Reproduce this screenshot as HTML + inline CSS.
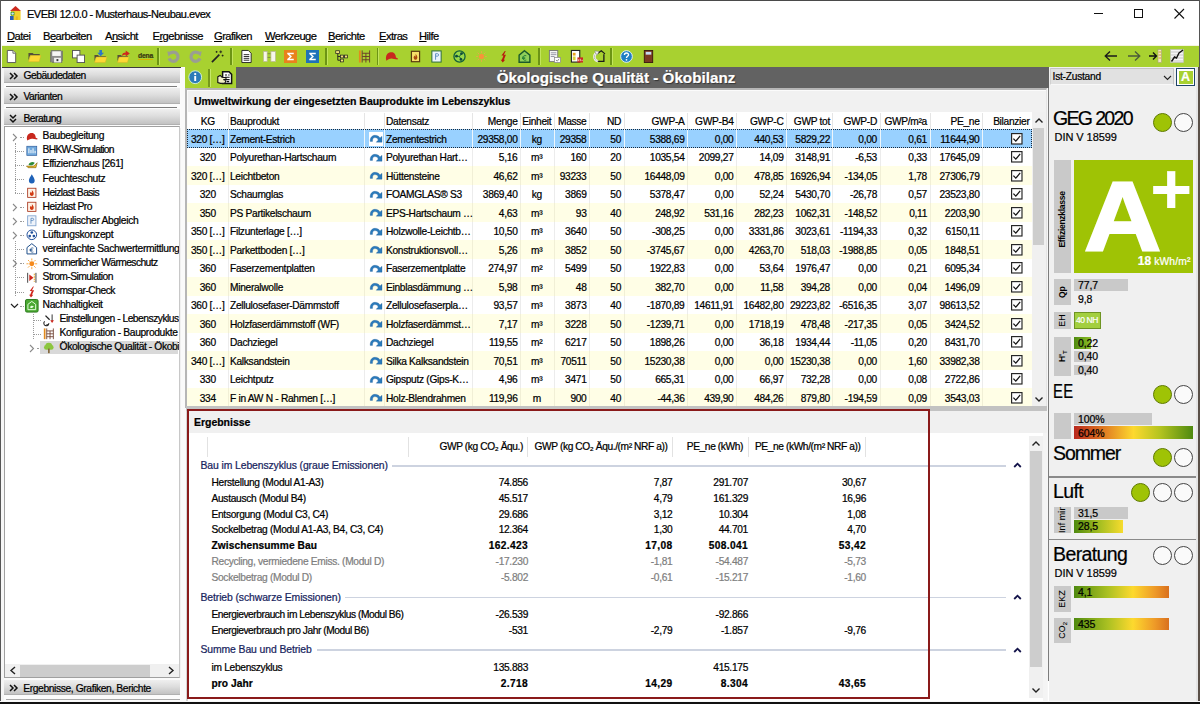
<!DOCTYPE html><html lang="de"><head><meta charset="utf-8"><title>EVEBI 12.0.0 - Musterhaus-Neubau.evex</title><style>
*{box-sizing:border-box;margin:0;padding:0}
html,body{width:1200px;height:704px;overflow:hidden;background:#fff}
body{position:relative;font-family:"Liberation Sans",sans-serif;font-size:10px;color:#000;letter-spacing:-0.25px;-webkit-text-stroke:0.22px}
.a{position:absolute;white-space:nowrap}
.t{position:absolute;white-space:nowrap;line-height:12px;height:12px}
.r{text-align:right}
.c{text-align:center}
.b{font-weight:bold}
u{text-decoration-thickness:1px;text-underline-offset:1px}
svg{position:absolute;overflow:visible}
.hdr{position:absolute;left:3.5px;width:176.5px;height:15px;background:linear-gradient(#efefef,#dedede 45%,#c2c2c2);border:0 solid #b0b0b0;border-bottom-width:1px}
.vl{position:absolute;background:#c9c9c9;left:1054px;width:17px;overflow:hidden}
.vt{position:absolute;white-space:nowrap;transform-origin:0 0;transform:rotate(-90deg);font-weight:bold;font-size:8.6px;letter-spacing:-0.12px;-webkit-text-stroke:0;text-align:center;line-height:17px;height:17px;left:0}
.big{position:absolute;white-space:nowrap;font-size:19.5px;letter-spacing:-0.6px;line-height:20px;left:1053px}
.din{position:absolute;white-space:nowrap;font-size:11px;letter-spacing:-0.05px;line-height:12px;left:1054.5px;-webkit-text-stroke:0.2px #000}
.circ{position:absolute;width:19px;height:19px;border-radius:50%;border:1px solid #444;background:#fafafa}
.circ.g{background:#9fc305;border-color:#5f7a00}
.bar{position:absolute;left:1074px;font-size:10.5px;line-height:12px;padding-left:4px;letter-spacing:-0.1px;white-space:nowrap}
.sep{position:absolute;width:1.7px;top:48px;height:17px;background:#6c9414;box-shadow:1px 0 0 #c2e45e}
</style></head><body>
<div class="a" style="left:0px;top:0px;width:1200px;height:1px;background:#4a4a4a;"></div>
<svg style="left:9.5px;top:6.2px" width="11" height="14.3" viewBox="0 0 11 14.3"><path d="M5.5 0L11 4.9H0Z" fill="#cc2a1e"/><rect x="1" y="4.9" width="9.6" height="9.1" fill="#f2d12e"/><rect x="0.6" y="5.8" width="3.8" height="3.6" fill="#3a9a3a"/><rect x="0" y="10" width="3.6" height="4" fill="#2a5fb8"/><circle cx="2.6" cy="7.6" r="1.2" fill="#cfe3f5"/><rect x="5.8" y="10.5" width="2" height="3.5" fill="#e8b820"/></svg>
<div class="t " style="left:27px;top:8px;font-size:11px;letter-spacing:-0.5px;line-height:13px;height:13px">EVEBI 12.0.0 - Musterhaus-Neubau.evex</div>
<svg style="left:1090px;top:5px" width="100" height="18" viewBox="0 0 100 18"><path d="M4 8.5H13" stroke="#111" stroke-width="1"/><rect x="44.5" y="4.5" width="8" height="8" fill="none" stroke="#111" stroke-width="1"/><path d="M84.5 4 L94 13.5 M94 4 L84.5 13.5" stroke="#111" stroke-width="1.1"/></svg>
<div class="t " style="left:7px;top:30px;font-size:11.2px;letter-spacing:-0.55px;line-height:13px;height:13px"><u>D</u>atei</div>
<div class="t " style="left:43px;top:30px;font-size:11.2px;letter-spacing:-0.55px;line-height:13px;height:13px">B<u>e</u>arbeiten</div>
<div class="t " style="left:105px;top:30px;font-size:11.2px;letter-spacing:-0.55px;line-height:13px;height:13px">A<u>n</u>sicht</div>
<div class="t " style="left:152.5px;top:30px;font-size:11.2px;letter-spacing:-0.55px;line-height:13px;height:13px">E<u>r</u>gebnisse</div>
<div class="t " style="left:214px;top:30px;font-size:11.2px;letter-spacing:-0.55px;line-height:13px;height:13px"><u>G</u>rafiken</div>
<div class="t " style="left:265px;top:30px;font-size:11.2px;letter-spacing:-0.55px;line-height:13px;height:13px"><u>W</u>erkzeuge</div>
<div class="t " style="left:328px;top:30px;font-size:11.2px;letter-spacing:-0.55px;line-height:13px;height:13px"><u>B</u>erichte</div>
<div class="t " style="left:379px;top:30px;font-size:11.2px;letter-spacing:-0.55px;line-height:13px;height:13px"><u>E</u>xtras</div>
<div class="t " style="left:419px;top:30px;font-size:11.2px;letter-spacing:-0.55px;line-height:13px;height:13px"><u>H</u>ilfe</div>
<div class="a" style="left:0px;top:44.5px;width:1200px;height:1.5px;background:#f6f4e0;"></div>
<div class="a" style="left:0px;top:46px;width:1200px;height:21.2px;background:#a8d130;"></div>
<div class="sep" style="left:157.2px"></div>
<div class="sep" style="left:230.3px"></div>
<div class="sep" style="left:325.3px"></div>
<div class="sep" style="left:376.8px"></div>
<div class="sep" style="left:538.3px"></div>
<div class="sep" style="left:610.3px"></div>
<svg style="left:5.0px;top:50.4px" width="13" height="13" viewBox="0 0 14 14"><path d="M2.5 0.5H8.5L11.5 3.5V13.5H2.5Z" fill="#fff" stroke="#555" stroke-width="1"/><path d="M8.5 0.5V3.5H11.5" fill="#ddd" stroke="#555" stroke-width="0.8"/></svg>
<svg style="left:28.0px;top:50.4px" width="13" height="13" viewBox="0 0 14 14"><path d="M0.5 3.2H5L6.2 4.4H12.6V6H2.2L0.5 11Z" fill="#55503a"/><path d="M0.6 12.6L2.6 6H13.8L12 12.6Z" fill="#fdd835" stroke="#d8b020" stroke-width="0.5"/></svg>
<svg style="left:49.5px;top:50.4px" width="13" height="13" viewBox="0 0 14 14"><rect x="0.8" y="0.8" width="12.4" height="12.4" fill="#8e8e8e" stroke="#6a6a6a" stroke-width="1" stroke-dasharray="11 1.4"/><rect x="2.4" y="1.4" width="9.2" height="5" fill="#f6f6f6"/><rect x="4.4" y="8.4" width="7.4" height="5" fill="#f0f0f0"/><rect x="7" y="9.8" width="2" height="2.2" fill="#333"/></svg>
<svg style="left:71.5px;top:50.4px" width="13" height="13" viewBox="0 0 14 14"><rect x="0.5" y="0.5" width="8" height="8" fill="#fff" stroke="#555"/><rect x="5.5" y="5.5" width="8" height="8" fill="#fff" stroke="#555"/></svg>
<svg style="left:94.0px;top:50.4px" width="13" height="13" viewBox="0 0 14 14"><path d="M0.5 5.4H4.4L5.4 6.6H12.8V8H2L0.5 12Z" fill="#55503a"/><path d="M0.6 13.4L2.4 7.6H13.8L12.2 13.4Z" fill="#fdd835" stroke="#d8b020" stroke-width="0.5"/><path d="M5.8 0H8.6V3H10.8L7.2 6.6L3.6 3H5.8Z" fill="#2b78c8"/></svg>
<svg style="left:116.5px;top:50.4px" width="13" height="13" viewBox="0 0 14 14"><path d="M0.5 5.4H4.4L5.4 6.6H11.8V8H2L0.5 12Z" fill="#55503a"/><path d="M0.6 13.4L2.4 7.6H12.8L11.2 13.4Z" fill="#fdd835" stroke="#d8b020" stroke-width="0.5"/><path d="M5.4 6.4C5.4 3.6 7 2.6 9.4 2.6V0.6L13.8 3.8L9.4 7V5C7.6 5 6.4 5.2 5.4 6.4Z" fill="#d0261c"/></svg>
<div class="t " style="left:138px;top:51px;font-size:6.8px;font-weight:bold;color:#3a3a12;letter-spacing:-0.2px;line-height:10px;height:10px;text-decoration:underline;text-decoration-color:#d8b000;text-underline-offset:1px">dena</div>
<svg style="left:166.5px;top:50.4px" width="13" height="13" viewBox="0 0 14 14"><path d="M3.4 3.6A5 5 0 1 1 2.2 9" fill="none" stroke="#9a9e92" stroke-width="3.5"/><path d="M0.3 1.6L6.6 2.2L1.6 7Z" fill="#9a9e92"/></svg>
<svg style="left:188.5px;top:50.4px" width="13" height="13" viewBox="0 0 14 14"><path d="M10.6 3.6A5 5 0 1 0 11.8 9" fill="none" stroke="#9a9e92" stroke-width="3.5"/><path d="M13.7 1.6L7.4 2.2L12.4 7Z" fill="#9a9e92"/></svg>
<svg style="left:211.0px;top:50.4px" width="13" height="13" viewBox="0 0 14 14"><path d="M1 13L9 5" stroke="#222" stroke-width="1.8"/><path d="M10.5 0.5V3.5M9 2H12M12.5 5V7M11.5 6H13.5M6 1V3M5 2H7" stroke="#1a1a1a" stroke-width="0.9"/></svg>
<svg style="left:240.0px;top:50.4px" width="13" height="13" viewBox="0 0 14 14"><path d="M2 0.5H9L12 3.5V13.5H2Z" fill="#fff" stroke="#222" stroke-width="1"/><path d="M4 5H10M4 7H10M4 9H10M4 11H10" stroke="#222" stroke-width="1"/></svg>
<svg style="left:263.0px;top:50.4px" width="13" height="13" viewBox="0 0 14 14"><rect x="0.5" y="1.5" width="4" height="11" fill="#f7f7ea" stroke="#b8b890" stroke-width="0.8"/><rect x="8.5" y="1.5" width="5" height="11" fill="#f7f7ea" stroke="#b8b890" stroke-width="0.8"/><path d="M5 4H8M5 8H8" stroke="#7a8a40" stroke-width="1"/></svg>
<svg style="left:283.5px;top:50.4px" width="13" height="13" viewBox="0 0 14 14"><rect width="14" height="14" fill="#e9821c"/><path d="M3.5 3H10.5V4.6H6L8.6 7L6 9.4H10.5V11H3.5V9.8L6.4 7L3.5 4.2Z" fill="#fff"/></svg>
<svg style="left:306px;top:50.4px" width="13" height="13" viewBox="0 0 14 14"><rect width="14" height="14" fill="#1f72b8"/><path d="M3.5 3H10.5V4.6H6L8.6 7L6 9.4H10.5V11H3.5V9.8L6.4 7L3.5 4.2Z" fill="#fff"/></svg>
<svg style="left:335.0px;top:50.4px" width="13" height="13" viewBox="0 0 14 14"><path d="M3 3V11H6M3 7H6M9 7H11" stroke="#222" stroke-width="1" fill="none"/><rect x="0.8" y="0.8" width="4" height="3" fill="#f5e27a" stroke="#222" stroke-width="0.8"/><rect x="5.8" y="5.5" width="3.4" height="3" fill="#f5e27a" stroke="#222" stroke-width="0.8"/><rect x="5.8" y="9.8" width="3.4" height="3" fill="#f5e27a" stroke="#222" stroke-width="0.8"/><rect x="10.2" y="5.5" width="3.2" height="3" fill="#f5e27a" stroke="#222" stroke-width="0.8"/></svg>
<svg style="left:358.0px;top:50.4px" width="13" height="13" viewBox="0 0 14 14"><rect x="1" y="0.5" width="2" height="13" fill="#e38a1c"/><path d="M4.5 0.5V13.5M12.5 0.5V13.5M4.5 3.5H12.5M4.5 7H12.5M4.5 10.5H12.5M8.5 3.5V13.5" stroke="#6a3a2a" stroke-width="1" fill="none"/></svg>
<svg style="left:385.0px;top:50.4px" width="13" height="13" viewBox="0 0 14 14"><path d="M1 9.5C1 4 4 2.5 7 2.5C10.5 2.5 11.5 5.5 11.8 8L14 9.2L13.5 10.2L8 9.3C5 9 3 10.5 1.5 11.5Z" fill="#c8281e"/></svg>
<svg style="left:408.5px;top:50.4px" width="13" height="13" viewBox="0 0 14 14"><rect x="2.6" y="1.4" width="8.8" height="11.2" fill="#f6e06a" stroke="#5a3a10" stroke-width="1.3"/><path d="M7 4C8.3 5.6 9.2 6.6 9 8.4C8.9 9.8 7.9 10.6 7 10.6C6.1 10.6 5.1 9.8 5 8.4C4.9 7.4 5.7 6.9 5.9 6C6.5 6.5 6.6 7 6.6 7.5C7.2 6.5 7.3 5.2 7 4Z" fill="#a84a10"/></svg>
<svg style="left:430.0px;top:50.4px" width="13" height="13" viewBox="0 0 14 14"><rect x="2" y="1" width="10" height="12" fill="#eaf3fb" stroke="#2e6e3a" stroke-width="1.1"/><path d="M6 10.5V4H8.2C9.6 4 9.6 6.6 8.2 6.6H6" fill="none" stroke="#5a88bf" stroke-width="1"/></svg>
<svg style="left:453.0px;top:50.4px" width="13" height="13" viewBox="0 0 14 14"><circle cx="7" cy="7" r="6" fill="#98d84a" stroke="#14603a" stroke-width="1.4"/><path d="M7 7L9.2 3.6M7 7L3.6 6.6M7 7L8.6 10.4" stroke="#14603a" stroke-width="1"/><circle cx="9.2" cy="3.8" r="1.5" fill="#0e4a3a"/><circle cx="3.8" cy="6.6" r="1.5" fill="#0e4a3a"/><circle cx="8.6" cy="10.2" r="1.5" fill="#0e4a3a"/></svg>
<svg style="left:474.5px;top:50.4px" width="13" height="13" viewBox="0 0 14 14"><circle cx="7" cy="7" r="2.9" fill="#f5963a"/><path d="M7 1.2V3.2M7 10.8V12.8M1.2 7H3.2M10.8 7H12.8M2.9 2.9L4.3 4.3M9.7 9.7L11.1 11.1M11.1 2.9L9.7 4.3M2.9 11.1L4.3 9.7" stroke="#e8a84a" stroke-width="1"/></svg>
<svg style="left:496.5px;top:50.4px" width="13" height="13" viewBox="0 0 14 14"><path d="M8.4 1L4.8 6H7L5.2 10.4H4L6.2 13.4L8.8 10.4H7.4L9.6 5.2H7.4L9.4 1Z" fill="#b81a10"/></svg>
<svg style="left:518.0px;top:50.4px" width="13" height="13" viewBox="0 0 14 14"><path d="M7 0.8L12.8 5.5V13.2H1.2V5.5Z" fill="#90d05a" stroke="#1a5a2a" stroke-width="1.5"/><path d="M9 6.2C6.5 5 5.3 7 5.3 8.5C5.3 10 6.5 12 9 10.8M4.3 7.8H7.8M4.3 9.2H7.8" stroke="#1e7a32" stroke-width="0.9" fill="none"/></svg>
<svg style="left:548.0px;top:50.4px" width="13" height="13" viewBox="0 0 14 14"><rect x="1.5" y="0.5" width="9" height="12" fill="#f6f6f6" stroke="#777" stroke-width="1"/><path d="M3 3H9M3 5H9M3 7H7" stroke="#889" stroke-width="0.9"/><rect x="7" y="8" width="6.5" height="5.5" fill="#fff" stroke="#888" stroke-width="0.8"/><path d="M8.5 10.8L10 12L12 9.5" stroke="#666" stroke-width="0.8" fill="none"/></svg>
<svg style="left:570.0px;top:50.4px" width="13" height="13" viewBox="0 0 14 14"><rect x="1.5" y="0.5" width="9" height="12.5" fill="#fff" stroke="#222" stroke-width="1.2"/><rect x="3" y="3" width="3" height="3" fill="#e8a21c"/><rect x="3" y="7" width="3" height="4" fill="#d8d23a"/><rect x="8" y="8" width="6" height="5.5" fill="#c8281e"/><path d="M9 12V10M11 12V9.5M13 12V10.5" stroke="#fff" stroke-width="0.8"/></svg>
<svg style="left:591.5px;top:50.4px" width="13" height="13" viewBox="0 0 14 14"><path d="M5.5 4L10 0.8L14 4.2" fill="none" stroke="#1a1a1a" stroke-width="1.3"/><path d="M12.8 4.5V12.2H6.5" fill="none" stroke="#1a1a1a" stroke-width="1.4"/><path d="M6.5 12.2C2.2 11.2 1.2 6.2 4.6 3.2" fill="none" stroke="#f4f4f4" stroke-width="2.6"/><path d="M6.5 12.2C2.2 11.2 1.2 6.2 4.6 3.2" fill="none" stroke="#8a8a8a" stroke-width="0.9" stroke-dasharray="1.2 0.8"/><path d="M2.8 1L7.5 1.6L5.4 5.6Z" fill="#f4f4f4" stroke="#777" stroke-width="0.5"/></svg>
<svg style="left:620.0px;top:50.4px" width="13" height="13" viewBox="0 0 14 14"><circle cx="7" cy="7" r="6.3" fill="#1f7fc4" stroke="#e8f2fa" stroke-width="1"/><path d="M4.8 5.3C4.8 2.6 9.2 2.6 9.2 5.2C9.2 6.8 7 6.8 7 8.6" fill="none" stroke="#fff" stroke-width="1.5"/><circle cx="7" cy="10.6" r="0.95" fill="#fff"/></svg>
<svg style="left:641.5px;top:50.4px" width="13" height="13" viewBox="0 0 14 14"><rect x="2.5" y="0.5" width="9" height="13" fill="#7a3a22" stroke="#3a1a10" stroke-width="1"/><rect x="4" y="2" width="6" height="3" fill="#c4dcf2"/></svg>
<svg style="left:1104px;top:48.8px" width="80" height="14" viewBox="0 0 80 14"><path d="M1 7H13M6 2.5L1.2 7L6 11.5" fill="none" stroke="#1a1a1a" stroke-width="1.3"/><path d="M24 7H36M31 2.5L35.8 7L31 11.5" fill="none" stroke="#4a5a3a" stroke-width="1.3"/><path d="M45 7H52M49 3.5L52.5 7L49 10.5" fill="none" stroke="#111" stroke-width="1.4"/><rect x="54" y="0.5" width="3.5" height="13" fill="#efe9c0" stroke="#a8a070" stroke-width="0.6"/><path d="M54.5 3H57M54.5 6H57M54.5 9H57" stroke="#d8a22a" stroke-width="1"/><rect x="66.5" y="0.5" width="13" height="13" fill="#f4f4f4" stroke="#bbb" stroke-width="0.6"/><path d="M67 3H79M67 6H79M67 9H79M67 12H79" stroke="#aaa" stroke-width="0.6"/><path d="M67.5 12.5L70.5 8L72.5 9L75 4L79 1" fill="none" stroke="#111" stroke-width="1.4"/></svg>
<div class="a" style="left:0px;top:67px;width:185.5px;height:637px;background:#f0f0f0;"></div>
<div class="a" style="left:3.5px;top:68px;width:177.5px;height:60px;background:#fbfbfb;"></div>
<div class="hdr" style="top:68px;height:14.8px"></div>
<svg style="left:8.5px;top:71.7px" width="9" height="8" viewBox="0 0 9 8"><path d="M1 1L4 4L1 7M5 1L8 4L5 7" fill="none" stroke="#111" stroke-width="1.5"/></svg>
<div class="t " style="left:23.5px;top:69.4px;font-size:10.3px;letter-spacing:-0.5px;line-height:13px;height:13px">Gebäudedaten</div>
<div class="a" style="left:6px;top:85.6px;width:171px;height:1.1px;background:#7c7c7c;"></div>
<div class="hdr" style="top:87.6px;height:16.2px"></div>
<svg style="left:8.5px;top:92.6px" width="9" height="8" viewBox="0 0 9 8"><path d="M1 1L4 4L1 7M5 1L8 4L5 7" fill="none" stroke="#111" stroke-width="1.5"/></svg>
<div class="t " style="left:23.5px;top:90.3px;font-size:10.3px;letter-spacing:-0.5px;line-height:13px;height:13px">Varianten</div>
<div class="a" style="left:6px;top:107.2px;width:171px;height:1.1px;background:#7c7c7c;"></div>
<div class="hdr" style="top:109.2px;height:16.2px"></div>
<svg style="left:8.5px;top:113.7px" width="8" height="9" viewBox="0 0 8 9"><path d="M1 1L4 4L7 1M1 5L4 8L7 5" fill="none" stroke="#111" stroke-width="1.5"/></svg>
<div class="t " style="left:23.5px;top:111.9px;font-size:10.3px;letter-spacing:-0.5px;line-height:13px;height:13px">Beratung</div>
<div class="a" style="left:0px;top:67px;width:181.6px;height:1px;background:#3c3c3c;"></div>
<div class="a" style="left:180.6px;top:67px;width:1px;height:60px;background:#3c3c3c;"></div>
<div class="a" style="left:4px;top:126px;width:176px;height:552px;background:#fff;border:1px solid #a0a0a0;border-right-color:#c8c8c8"></div>
<div class="a" style="left:5px;top:128px;width:174px;height:535px;overflow:hidden">
<svg style="left:7px;top:5px" width="6" height="9" viewBox="0 0 6 9"><path d="M1 1L4.5 4.5L1 8" fill="none" stroke="#8a8a8a" stroke-width="1.1"/></svg>
<div class="a" style="left:15px;top:8.8px;width:4px;height:0;border-top:1px dotted #9a9a9a"></div>
<svg style="left:20.7px;top:3.0000000000000115px" width="11.6" height="11.6" viewBox="0 0 14 14"><path d="M1 9.5C1 4 4 2.5 7 2.5C10.5 2.5 11.5 5.5 11.8 8L14 9.2L13.5 10.2L8 9.3C5 9 3 10.5 1.5 11.5Z" fill="#c8281e"/></svg>
<div class="t" style="left:37.6px;top:2.3px;font-size:10.3px;letter-spacing:-0.33px">Baubegleitung</div>
<div class="a" style="left:10px;top:22.9px;width:9px;height:0;border-top:1px dotted #9a9a9a"></div>
<svg style="left:20.7px;top:17.060000000000013px" width="11.6" height="11.6" viewBox="0 0 14 14"><rect x="1" y="1.5" width="12" height="11" fill="#6fa8dc" stroke="#2a5a9a" stroke-width="0.8"/><path d="M3.5 10V4M6 10V6M8.5 10V4M11 10V7" stroke="#fff" stroke-width="1.2"/></svg>
<div class="t" style="left:37.6px;top:16.4px;font-size:10.3px;letter-spacing:-0.73px">BHKW-Simulation</div>
<div class="a" style="left:10px;top:36.9px;width:9px;height:0;border-top:1px dotted #9a9a9a"></div>
<svg style="left:20.7px;top:31.120000000000015px" width="11.6" height="11.6" viewBox="0 0 14 14"><path d="M0.5 8.5H9.5L13.5 4.5L12 10.5H2.5Z" fill="#e8b82a" stroke="#7a5a10" stroke-width="0.7"/><path d="M3 7C4 3.5 8.5 3 10.5 4.5C9 7.5 6 8.5 3 7Z" fill="#2e8b3a"/></svg>
<div class="t" style="left:37.6px;top:30.4px;font-size:10.3px;letter-spacing:-0.33px">Effizienzhaus [261]</div>
<div class="a" style="left:10px;top:51.0px;width:9px;height:0;border-top:1px dotted #9a9a9a"></div>
<svg style="left:20.7px;top:45.18000000000002px" width="11.6" height="11.6" viewBox="0 0 14 14"><path d="M7 1.5C9 5 10.5 7 10.5 9.2A3.5 3.5 0 0 1 3.5 9.2C3.5 7 5 5 7 1.5Z" fill="#1f62b8"/></svg>
<div class="t" style="left:37.6px;top:44.5px;font-size:10.3px;letter-spacing:-0.33px">Feuchteschutz</div>
<div class="a" style="left:10px;top:65.0px;width:9px;height:0;border-top:1px dotted #9a9a9a"></div>
<svg style="left:20.7px;top:59.24000000000002px" width="11.6" height="11.6" viewBox="0 0 14 14"><rect x="2" y="1.5" width="10" height="11" fill="#fff4e8" stroke="#a83218" stroke-width="1"/><path d="M7 3.5C8.5 5.5 9.5 6.5 9.3 8.5C9.2 10 8 10.8 7 10.8C6 10.8 4.8 10 4.7 8.5C4.6 7.3 5.5 6.8 5.8 5.8C6.5 6.3 6.6 6.9 6.6 7.4C7.3 6.3 7.3 4.8 7 3.5Z" fill="#d23a12"/></svg>
<div class="t" style="left:37.6px;top:58.5px;font-size:10.3px;letter-spacing:-0.58px">Heizlast Basis</div>
<svg style="left:7px;top:75px" width="6" height="9" viewBox="0 0 6 9"><path d="M1 1L4.5 4.5L1 8" fill="none" stroke="#8a8a8a" stroke-width="1.1"/></svg>
<div class="a" style="left:15px;top:79.1px;width:4px;height:0;border-top:1px dotted #9a9a9a"></div>
<svg style="left:20.7px;top:73.30000000000003px" width="11.6" height="11.6" viewBox="0 0 14 14"><rect x="2" y="1.5" width="10" height="11" fill="#fff4e8" stroke="#a83218" stroke-width="1"/><path d="M7 3.5C8.5 5.5 9.5 6.5 9.3 8.5C9.2 10 8 10.8 7 10.8C6 10.8 4.8 10 4.7 8.5C4.6 7.3 5.5 6.8 5.8 5.8C6.5 6.3 6.6 6.9 6.6 7.4C7.3 6.3 7.3 4.8 7 3.5Z" fill="#d23a12"/></svg>
<div class="t" style="left:37.6px;top:72.6px;font-size:10.3px;letter-spacing:-0.52px">Heizlast Pro</div>
<svg style="left:7px;top:89px" width="6" height="9" viewBox="0 0 6 9"><path d="M1 1L4.5 4.5L1 8" fill="none" stroke="#8a8a8a" stroke-width="1.1"/></svg>
<div class="a" style="left:15px;top:93.2px;width:4px;height:0;border-top:1px dotted #9a9a9a"></div>
<svg style="left:20.7px;top:87.36000000000003px" width="11.6" height="11.6" viewBox="0 0 14 14"><rect x="2" y="1" width="10" height="12" fill="#eef3fa" stroke="#7ba0cc" stroke-width="1"/><path d="M6 10.5V4H8.2C9.6 4 9.6 6.6 8.2 6.6H6" fill="none" stroke="#5a88bf" stroke-width="1"/></svg>
<div class="t" style="left:37.6px;top:86.7px;font-size:10.3px;letter-spacing:-0.33px">hydraulischer Abgleich</div>
<svg style="left:7px;top:103px" width="6" height="9" viewBox="0 0 6 9"><path d="M1 1L4.5 4.5L1 8" fill="none" stroke="#8a8a8a" stroke-width="1.1"/></svg>
<div class="a" style="left:15px;top:107.2px;width:4px;height:0;border-top:1px dotted #9a9a9a"></div>
<svg style="left:20.7px;top:101.42000000000003px" width="11.6" height="11.6" viewBox="0 0 14 14"><circle cx="7" cy="7" r="5.8" fill="#fff" stroke="#1f4f9a" stroke-width="1.2"/><circle cx="7" cy="4.2" r="1.6" fill="#1f4f9a"/><circle cx="4.5" cy="8.6" r="1.6" fill="#1f4f9a"/><circle cx="9.5" cy="8.6" r="1.6" fill="#1f4f9a"/></svg>
<div class="t" style="left:37.6px;top:100.7px;font-size:10.3px;letter-spacing:-0.33px">Lüftungskonzept</div>
<div class="a" style="left:10px;top:121.3px;width:9px;height:0;border-top:1px dotted #9a9a9a"></div>
<svg style="left:20.7px;top:115.48000000000003px" width="11.6" height="11.6" viewBox="0 0 14 14"><path d="M7 0.8L12.8 5.5V13.2H1.2V5.5Z" fill="#fff" stroke="#1f4f8a" stroke-width="1.2"/><path d="M9 6.2C6.5 5 5.3 7 5.3 8.5C5.3 10 6.5 12 9 10.8M4.3 7.8H7.8M4.3 9.2H7.8" stroke="#1f4f8a" stroke-width="0.9" fill="none"/></svg>
<div class="t" style="left:37.6px;top:114.8px;font-size:10.3px;letter-spacing:-0.33px">vereinfachte Sachwertermittlung</div>
<svg style="left:7px;top:131px" width="6" height="9" viewBox="0 0 6 9"><path d="M1 1L4.5 4.5L1 8" fill="none" stroke="#8a8a8a" stroke-width="1.1"/></svg>
<div class="a" style="left:15px;top:135.3px;width:4px;height:0;border-top:1px dotted #9a9a9a"></div>
<svg style="left:20.7px;top:129.54000000000002px" width="11.6" height="11.6" viewBox="0 0 14 14"><circle cx="7" cy="7" r="3" fill="#f58a1c"/><path d="M7 0.5V3M7 11V13.5M0.5 7H3M11 7H13.5M2.4 2.4L4.2 4.2M9.8 9.8L11.6 11.6M11.6 2.4L9.8 4.2M2.4 11.6L4.2 9.8" stroke="#f7a030" stroke-width="1.1"/></svg>
<div class="t" style="left:37.6px;top:128.8px;font-size:10.3px;letter-spacing:-0.60px">Sommerlicher Wärmeschutz</div>
<div class="a" style="left:10px;top:149.4px;width:9px;height:0;border-top:1px dotted #9a9a9a"></div>
<svg style="left:20.7px;top:143.59999999999997px" width="11.6" height="11.6" viewBox="0 0 14 14"><path d="M2 1V13M12 1V13" stroke="#444" stroke-width="1.2"/><path d="M4 3L9 7L4 11Z" fill="#d0261c"/><path d="M10 2V12" stroke="#e8a21c" stroke-width="1.2" stroke-dasharray="2 1"/></svg>
<div class="t" style="left:37.6px;top:142.9px;font-size:10.3px;letter-spacing:-0.54px">Strom-Simulation</div>
<div class="a" style="left:10px;top:163.5px;width:9px;height:0;border-top:1px dotted #9a9a9a"></div>
<svg style="left:20.7px;top:157.66000000000003px" width="11.6" height="11.6" viewBox="0 0 14 14"><path d="M8.5 0.5L4.5 6H7L5 10.5H3.8L6 13.8L8.8 10.5H7.2L9.8 5H7.2L9.5 0.5Z" fill="#d0261c"/></svg>
<div class="t" style="left:37.6px;top:157.0px;font-size:10.3px;letter-spacing:-0.52px">Stromspar-Check</div>
<svg style="left:5px;top:175px" width="9" height="6" viewBox="0 0 9 6"><path d="M1 1L4.5 4.5L8 1" fill="none" stroke="#222" stroke-width="1.2"/></svg>
<div class="a" style="left:15px;top:177.5px;width:4px;height:0;border-top:1px dotted #9a9a9a"></div>
<svg style="left:19.7px;top:170.71999999999997px" width="13.6" height="13.6" viewBox="0 0 14 14"><rect x="0.5" y="0.5" width="13" height="13" rx="1.5" fill="#4aa832" stroke="#2a7a1c" stroke-width="1"/><path d="M7 2.5L11 5.5V11H3V5.5Z" fill="none" stroke="#e8ffe0" stroke-width="1"/><path d="M5 8.5C5.5 6.5 8 6.5 9 7.5C8 9.5 6 9.8 5 8.5Z" fill="#e8ffe0"/></svg>
<div class="t" style="left:37.6px;top:171.0px;font-size:10.3px;letter-spacing:-0.33px">Nachhaltigkeit</div>
<div class="a" style="left:28px;top:191.6px;width:8px;height:0;border-top:1px dotted #9a9a9a"></div>
<svg style="left:38.2px;top:185.78000000000003px" width="11.6" height="11.6" viewBox="0 0 14 14"><path d="M3 2L8 7" stroke="#222" stroke-width="1.6"/><path d="M2 9A3 3 0 1 0 7 11" fill="none" stroke="#222" stroke-width="1.3"/><path d="M11 0.5V9" stroke="#222" stroke-width="1.1"/><path d="M8.8 7.5L11 11L13.2 7.5Z" fill="#d0261c"/><path d="M4 13H7" stroke="#222" stroke-width="1.2"/></svg>
<div class="t" style="left:54.6px;top:185.1px;font-size:10.3px;letter-spacing:-0.51px">Einstellungen - Lebenszyklus</div>
<div class="a" style="left:28px;top:205.6px;width:8px;height:0;border-top:1px dotted #9a9a9a"></div>
<svg style="left:38.2px;top:199.83999999999997px" width="11.6" height="11.6" viewBox="0 0 14 14"><rect x="1" y="0.5" width="2" height="13" fill="#e38a1c"/><path d="M4.5 0.5V13.5M12.5 0.5V13.5M4.5 3.5H12.5M4.5 7H12.5M4.5 10.5H12.5M8.5 3.5V13.5" stroke="#6a3a2a" stroke-width="1" fill="none"/></svg>
<div class="t" style="left:54.6px;top:199.1px;font-size:10.3px;letter-spacing:-0.38px">Konfiguration - Bauprodukte</div>
<svg style="left:24px;top:216px" width="6" height="9" viewBox="0 0 6 9"><path d="M1 1L4.5 4.5L1 8" fill="none" stroke="#8a8a8a" stroke-width="1.1"/></svg>
<div class="a" style="left:32px;top:219.7px;width:4px;height:0;border-top:1px dotted #9a9a9a"></div>
<div class="a" style="left:35px;top:212.7px;width:138px;height:13.4px;background:#d9d9d9"></div>
<svg style="left:38.2px;top:213.90000000000003px" width="11.6" height="11.6" viewBox="0 0 14 14"><circle cx="7" cy="5" r="4.2" fill="#8cc63f"/><circle cx="4" cy="6.5" r="2.8" fill="#8cc63f"/><circle cx="10" cy="6.5" r="2.8" fill="#8cc63f"/><rect x="6.2" y="8" width="1.8" height="5.5" fill="#7a5a2a"/></svg>
<div class="t" style="left:54.6px;top:213.2px;font-size:10.3px;letter-spacing:-0.41px">Ökologische Qualität - Ökobi</div>
</div>
<div class="a" style="left:15px;top:143px;width:0px;height:50px;background:transparent;border-left:1px dotted #9a9a9a"></div>
<div class="a" style="left:15px;top:241px;width:0px;height:55px;background:transparent;border-left:1px dotted #9a9a9a"></div>
<div class="a" style="left:32.5px;top:312px;width:0px;height:27px;background:transparent;border-left:1px dotted #9a9a9a"></div>
<div class="a" style="left:5px;top:664px;width:174px;height:13px;background:#f0f0f0;"></div>
<div class="a" style="left:20px;top:664.5px;width:129.5px;height:12px;background:#cdcdcd;"></div>
<svg style="left:8.5px;top:666px" width="8" height="9" viewBox="0 0 8 9"><path d="M6 1L2 4.5L6 8" fill="none" stroke="#222" stroke-width="1.4"/></svg>
<svg style="left:167px;top:666px" width="8" height="9" viewBox="0 0 8 9"><path d="M2 1L6 4.5L2 8" fill="none" stroke="#222" stroke-width="1.4"/></svg>
<div class="a" style="left:3.5px;top:678px;width:177.5px;height:23px;background:#fbfbfb;"></div>
<div class="hdr" style="top:680.2px;height:15.3px"></div>
<div class="a" style="left:6px;top:698.5px;width:174px;height:1px;background:#a8a8a8;"></div>
<svg style="left:8.5px;top:684px" width="9" height="8" viewBox="0 0 9 8"><path d="M1 1L4 4L1 7M5 1L8 4L5 7" fill="none" stroke="#111" stroke-width="1.5"/></svg>
<div class="t " style="left:23.3px;top:682px;font-size:10.3px;letter-spacing:-0.4px;line-height:13px;height:13px">Ergebnisse, Grafiken, Berichte</div>
<div class="a" style="left:181px;top:67px;width:4.5px;height:637px;background:#fafafa;"></div>
<div class="a" style="left:185px;top:67px;width:864px;height:21px;background:#626262;"></div>
<div class="a" style="left:185px;top:67px;width:51px;height:21px;background:#a8d130;"></div>
<div class="a" style="left:208.3px;top:68.5px;width:1.6px;height:18.5px;background:#75981a;box-shadow:1px 0 0 #c6e86a"></div>
<svg style="left:188.3px;top:70.3px" width="14.4" height="14.4" viewBox="0 0 15 15"><circle cx="7.5" cy="7.5" r="6.7" fill="#2b7bb8" stroke="#d4f0d8" stroke-width="1"/><rect x="6.5" y="6.3" width="2" height="5.2" fill="#fff"/><circle cx="7.5" cy="4.2" r="1.2" fill="#fff"/></svg>
<svg style="left:217px;top:70.5px" width="15.5" height="13.5" viewBox="0 0 15.5 13.5"><path d="M5.6 0.8H12L14.6 3.4V12.4H5.6Z" fill="#fff" stroke="#111" stroke-width="1.5"/><path d="M8 4H10M11.2 4H12.6M8 6.3H12.6M8.6 8.6H12.6M9.6 10.6H12.2" stroke="#111" stroke-width="1.1"/><path d="M0.8 5.8L3.2 4.4L5 6.2L9 6.6V8.4L6.4 8.6L8.6 9.4V10.8L7.6 12.2L3.6 12.4L0.8 11.6Z" fill="#f2f0c4" stroke="#111" stroke-width="1.1"/></svg>
<div class="t b c" style="left:416px;top:68px;width:400px;font-size:15.2px;letter-spacing:0.02px;line-height:19px;height:19px;color:#fff;text-shadow:1px 1px 1px #333">Ökologische Qualität - Ökobilanz</div>
<div class="a" style="left:185px;top:88px;width:862px;height:320px;background:#f1f1f1;border:2px solid #b6b6b6;border-bottom:none;border-right:1px solid #e4e4e4;box-shadow:inset 1px 1px 0 #fbfbfb"></div>
<div class="t b" style="left:194px;top:95px;font-size:10.5px;letter-spacing:-0.03px">Umweltwirkung der eingesetzten Bauprodukte im Lebenszyklus</div>
<div class="a" style="left:188px;top:112px;width:844px;height:294px;background:#fff;"></div>
<div class="t c" style="left:187px;top:115.5px;width:41.5px;font-size:10.2px;letter-spacing:-0.3px;">KG</div>
<div class="a" style="left:227.5px;top:113px;width:1px;height:16.5px;background:#e5e5e5;"></div>
<div class="t " style="left:230.0px;top:115.5px;font-size:10.2px;letter-spacing:-0.3px;">Bauprodukt</div>
<div class="a" style="left:363.5px;top:113px;width:1px;height:16.5px;background:#e5e5e5;"></div>
<div class="a" style="left:383.5px;top:113px;width:1px;height:16.5px;background:#e5e5e5;"></div>
<div class="t " style="left:386.0px;top:115.5px;font-size:10.2px;letter-spacing:-0.3px;">Datensatz</div>
<div class="a" style="left:471.5px;top:113px;width:1px;height:16.5px;background:#e5e5e5;"></div>
<div class="t r" style="left:472px;top:115.5px;width:45.5px;font-size:10.2px;letter-spacing:-0.3px;">Menge</div>
<div class="a" style="left:519.5px;top:113px;width:1px;height:16.5px;background:#e5e5e5;"></div>
<div class="t c" style="left:520px;top:115.5px;width:33.5px;font-size:10.2px;letter-spacing:-0.3px;">Einheit</div>
<div class="a" style="left:553.5px;top:113px;width:1px;height:16.5px;background:#e5e5e5;"></div>
<div class="t r" style="left:553.5px;top:115.5px;width:33.0px;font-size:10.2px;letter-spacing:-0.3px;">Masse</div>
<div class="a" style="left:588.5px;top:113px;width:1px;height:16.5px;background:#e5e5e5;"></div>
<div class="t r" style="left:589px;top:115.5px;width:32.0px;font-size:10.2px;letter-spacing:-0.3px;">ND</div>
<div class="a" style="left:623.5px;top:113px;width:1px;height:16.5px;background:#e5e5e5;"></div>
<div class="t r" style="left:623.5px;top:115.5px;width:61.0px;font-size:10.2px;letter-spacing:-0.3px;">GWP-A</div>
<div class="a" style="left:686.5px;top:113px;width:1px;height:16.5px;background:#e5e5e5;"></div>
<div class="t r" style="left:687px;top:115.5px;width:46.5px;font-size:10.2px;letter-spacing:-0.3px;">GWP-B4</div>
<div class="a" style="left:735.5px;top:113px;width:1px;height:16.5px;background:#e5e5e5;"></div>
<div class="t r" style="left:736px;top:115.5px;width:47.5px;font-size:10.2px;letter-spacing:-0.3px;">GWP-C</div>
<div class="a" style="left:785.5px;top:113px;width:1px;height:16.5px;background:#e5e5e5;"></div>
<div class="t r" style="left:786px;top:115.5px;width:44.0px;font-size:10.2px;letter-spacing:-0.3px;">GWP tot</div>
<div class="a" style="left:831.5px;top:113px;width:1px;height:16.5px;background:#e5e5e5;"></div>
<div class="t r" style="left:832.5px;top:115.5px;width:44.5px;font-size:10.2px;letter-spacing:-0.3px;">GWP-D</div>
<div class="a" style="left:879.5px;top:113px;width:1px;height:16.5px;background:#e5e5e5;"></div>
<div class="t r" style="left:879.5px;top:115.5px;width:47.5px;font-size:10.2px;letter-spacing:-0.3px;">GWP/m²a</div>
<div class="a" style="left:929.5px;top:113px;width:1px;height:16.5px;background:#e5e5e5;"></div>
<div class="t r" style="left:929.5px;top:115.5px;width:50.0px;font-size:10.2px;letter-spacing:-0.3px;">PE_ne</div>
<div class="a" style="left:981.5px;top:113px;width:1px;height:16.5px;background:#e5e5e5;"></div>
<div class="t r" style="left:982px;top:115.5px;width:47.5px;font-size:10.2px;letter-spacing:-0.3px;">Bilanzier</div>
<div class="a" style="left:187px;top:129.4px;width:845px;height:18.5px;background:#99d1ff;"></div>
<div class="a" style="left:227.5px;top:129.4px;width:1px;height:18.5px;background:#eef6fb;"></div>
<div class="a" style="left:363.5px;top:129.4px;width:1px;height:18.5px;background:#eef6fb;"></div>
<div class="a" style="left:383.5px;top:129.4px;width:1px;height:18.5px;background:#eef6fb;"></div>
<div class="a" style="left:471.5px;top:129.4px;width:1px;height:18.5px;background:#eef6fb;"></div>
<div class="a" style="left:519.5px;top:129.4px;width:1px;height:18.5px;background:#eef6fb;"></div>
<div class="a" style="left:553.5px;top:129.4px;width:1px;height:18.5px;background:#eef6fb;"></div>
<div class="a" style="left:588.5px;top:129.4px;width:1px;height:18.5px;background:#eef6fb;"></div>
<div class="a" style="left:623.5px;top:129.4px;width:1px;height:18.5px;background:#eef6fb;"></div>
<div class="a" style="left:686.5px;top:129.4px;width:1px;height:18.5px;background:#eef6fb;"></div>
<div class="a" style="left:735.5px;top:129.4px;width:1px;height:18.5px;background:#eef6fb;"></div>
<div class="a" style="left:785.5px;top:129.4px;width:1px;height:18.5px;background:#eef6fb;"></div>
<div class="a" style="left:831.5px;top:129.4px;width:1px;height:18.5px;background:#eef6fb;"></div>
<div class="a" style="left:879.5px;top:129.4px;width:1px;height:18.5px;background:#eef6fb;"></div>
<div class="a" style="left:929.5px;top:129.4px;width:1px;height:18.5px;background:#eef6fb;"></div>
<div class="a" style="left:981.5px;top:129.4px;width:1px;height:18.5px;background:#eef6fb;"></div>
<div class="t c" style="left:187px;top:133.5px;width:41.5px;font-size:10.2px;letter-spacing:-0.3px;">320 […]</div>
<div class="t " style="left:230.0px;top:133.5px;font-size:10.2px;letter-spacing:-0.3px;">Zement-Estrich</div>
<div class="a" style="left:368.8px;top:132.20000000000002px;width:14.5px;height:13.5px;background:#fff;"></div>
<svg style="left:370px;top:135.0px" width="12" height="7.5" viewBox="0 0 12 7.5"><path d="M0.2 6.4C0 2.6 2 0.3 5 0.3C7.5 0.3 9 1.4 10 2.9L12 1.3V7.2H6.2L8.3 5C7.4 3.4 6.4 2.6 5 2.6C3.2 2.6 2.4 4 2.5 6.4Z" fill="#2a7abb" stroke="#1d5a92" stroke-width="0.3"/></svg>
<div class="t " style="left:386.0px;top:133.5px;font-size:10.2px;letter-spacing:-0.3px;">Zementestrich</div>
<div class="t r" style="left:472px;top:133.5px;width:45.5px;font-size:10.2px;letter-spacing:-0.3px;">29358,00</div>
<div class="t c" style="left:520px;top:133.5px;width:33.5px;font-size:10.2px;letter-spacing:-0.3px;">kg</div>
<div class="t r" style="left:553.5px;top:133.5px;width:33.0px;font-size:10.2px;letter-spacing:-0.3px;">29358</div>
<div class="t r" style="left:589px;top:133.5px;width:32.0px;font-size:10.2px;letter-spacing:-0.3px;">50</div>
<div class="t r" style="left:623.5px;top:133.5px;width:61.0px;font-size:10.2px;letter-spacing:-0.3px;">5388,69</div>
<div class="t r" style="left:687px;top:133.5px;width:46.5px;font-size:10.2px;letter-spacing:-0.3px;">0,00</div>
<div class="t r" style="left:736px;top:133.5px;width:47.5px;font-size:10.2px;letter-spacing:-0.3px;">440,53</div>
<div class="t r" style="left:786px;top:133.5px;width:44.0px;font-size:10.2px;letter-spacing:-0.3px;">5829,22</div>
<div class="t r" style="left:832.5px;top:133.5px;width:44.5px;font-size:10.2px;letter-spacing:-0.3px;">0,00</div>
<div class="t r" style="left:879.5px;top:133.5px;width:47.5px;font-size:10.2px;letter-spacing:-0.3px;">0,61</div>
<div class="t r" style="left:929.5px;top:133.5px;width:50.0px;font-size:10.2px;letter-spacing:-0.3px;">11644,90</div>
<svg style="left:1010.7px;top:133px" width="11.6" height="11.6" viewBox="0 0 11.6 11.6"><rect x="0.6" y="0.6" width="10.4" height="10.4" fill="#fff" stroke="#222" stroke-width="1.15"/><path d="M2.4 5.6L4.8 8.2L9.2 2.8" fill="none" stroke="#111" stroke-width="1.2"/></svg>
<div class="a" style="left:227.5px;top:147.9px;width:1px;height:18.5px;background:#ececec;"></div>
<div class="a" style="left:363.5px;top:147.9px;width:1px;height:18.5px;background:#ececec;"></div>
<div class="a" style="left:383.5px;top:147.9px;width:1px;height:18.5px;background:#ececec;"></div>
<div class="a" style="left:471.5px;top:147.9px;width:1px;height:18.5px;background:#ececec;"></div>
<div class="a" style="left:519.5px;top:147.9px;width:1px;height:18.5px;background:#ececec;"></div>
<div class="a" style="left:553.5px;top:147.9px;width:1px;height:18.5px;background:#ececec;"></div>
<div class="a" style="left:588.5px;top:147.9px;width:1px;height:18.5px;background:#ececec;"></div>
<div class="a" style="left:623.5px;top:147.9px;width:1px;height:18.5px;background:#ececec;"></div>
<div class="a" style="left:686.5px;top:147.9px;width:1px;height:18.5px;background:#ececec;"></div>
<div class="a" style="left:735.5px;top:147.9px;width:1px;height:18.5px;background:#ececec;"></div>
<div class="a" style="left:785.5px;top:147.9px;width:1px;height:18.5px;background:#ececec;"></div>
<div class="a" style="left:831.5px;top:147.9px;width:1px;height:18.5px;background:#ececec;"></div>
<div class="a" style="left:879.5px;top:147.9px;width:1px;height:18.5px;background:#ececec;"></div>
<div class="a" style="left:929.5px;top:147.9px;width:1px;height:18.5px;background:#ececec;"></div>
<div class="a" style="left:981.5px;top:147.9px;width:1px;height:18.5px;background:#ececec;"></div>
<div class="t c" style="left:187px;top:152.0px;width:41.5px;font-size:10.2px;letter-spacing:-0.3px;">320</div>
<div class="t " style="left:230.0px;top:152.0px;font-size:10.2px;letter-spacing:-0.3px;">Polyurethan-Hartschaum</div>
<svg style="left:370px;top:153.5px" width="12" height="7.5" viewBox="0 0 12 7.5"><path d="M0.2 6.4C0 2.6 2 0.3 5 0.3C7.5 0.3 9 1.4 10 2.9L12 1.3V7.2H6.2L8.3 5C7.4 3.4 6.4 2.6 5 2.6C3.2 2.6 2.4 4 2.5 6.4Z" fill="#2a7abb" stroke="#1d5a92" stroke-width="0.3"/></svg>
<div class="t " style="left:386.0px;top:152.0px;font-size:10.2px;letter-spacing:-0.3px;">Polyurethan Hart…</div>
<div class="t r" style="left:472px;top:152.0px;width:45.5px;font-size:10.2px;letter-spacing:-0.3px;">5,16</div>
<div class="t c" style="left:520px;top:152.0px;width:33.5px;font-size:10.2px;letter-spacing:-0.3px;">m³</div>
<div class="t r" style="left:553.5px;top:152.0px;width:33.0px;font-size:10.2px;letter-spacing:-0.3px;">160</div>
<div class="t r" style="left:589px;top:152.0px;width:32.0px;font-size:10.2px;letter-spacing:-0.3px;">20</div>
<div class="t r" style="left:623.5px;top:152.0px;width:61.0px;font-size:10.2px;letter-spacing:-0.3px;">1035,54</div>
<div class="t r" style="left:687px;top:152.0px;width:46.5px;font-size:10.2px;letter-spacing:-0.3px;">2099,27</div>
<div class="t r" style="left:736px;top:152.0px;width:47.5px;font-size:10.2px;letter-spacing:-0.3px;">14,09</div>
<div class="t r" style="left:786px;top:152.0px;width:44.0px;font-size:10.2px;letter-spacing:-0.3px;">3148,91</div>
<div class="t r" style="left:832.5px;top:152.0px;width:44.5px;font-size:10.2px;letter-spacing:-0.3px;">-6,53</div>
<div class="t r" style="left:879.5px;top:152.0px;width:47.5px;font-size:10.2px;letter-spacing:-0.3px;">0,33</div>
<div class="t r" style="left:929.5px;top:152.0px;width:50.0px;font-size:10.2px;letter-spacing:-0.3px;">17645,09</div>
<svg style="left:1010.7px;top:151px" width="11.6" height="11.6" viewBox="0 0 11.6 11.6"><rect x="0.6" y="0.6" width="10.4" height="10.4" fill="#fff" stroke="#222" stroke-width="1.15"/><path d="M2.4 5.6L4.8 8.2L9.2 2.8" fill="none" stroke="#111" stroke-width="1.2"/></svg>
<div class="a" style="left:187px;top:166.4px;width:845px;height:18.5px;background:#fffee6;"></div>
<div class="a" style="left:227.5px;top:166.4px;width:1px;height:18.5px;background:#f1efd6;"></div>
<div class="a" style="left:363.5px;top:166.4px;width:1px;height:18.5px;background:#f1efd6;"></div>
<div class="a" style="left:383.5px;top:166.4px;width:1px;height:18.5px;background:#f1efd6;"></div>
<div class="a" style="left:471.5px;top:166.4px;width:1px;height:18.5px;background:#f1efd6;"></div>
<div class="a" style="left:519.5px;top:166.4px;width:1px;height:18.5px;background:#f1efd6;"></div>
<div class="a" style="left:553.5px;top:166.4px;width:1px;height:18.5px;background:#f1efd6;"></div>
<div class="a" style="left:588.5px;top:166.4px;width:1px;height:18.5px;background:#f1efd6;"></div>
<div class="a" style="left:623.5px;top:166.4px;width:1px;height:18.5px;background:#f1efd6;"></div>
<div class="a" style="left:686.5px;top:166.4px;width:1px;height:18.5px;background:#f1efd6;"></div>
<div class="a" style="left:735.5px;top:166.4px;width:1px;height:18.5px;background:#f1efd6;"></div>
<div class="a" style="left:785.5px;top:166.4px;width:1px;height:18.5px;background:#f1efd6;"></div>
<div class="a" style="left:831.5px;top:166.4px;width:1px;height:18.5px;background:#f1efd6;"></div>
<div class="a" style="left:879.5px;top:166.4px;width:1px;height:18.5px;background:#f1efd6;"></div>
<div class="a" style="left:929.5px;top:166.4px;width:1px;height:18.5px;background:#f1efd6;"></div>
<div class="a" style="left:981.5px;top:166.4px;width:1px;height:18.5px;background:#f1efd6;"></div>
<div class="t c" style="left:187px;top:170.5px;width:41.5px;font-size:10.2px;letter-spacing:-0.3px;">320 […]</div>
<div class="t " style="left:230.0px;top:170.5px;font-size:10.2px;letter-spacing:-0.3px;">Leichtbeton</div>
<svg style="left:370px;top:172.0px" width="12" height="7.5" viewBox="0 0 12 7.5"><path d="M0.2 6.4C0 2.6 2 0.3 5 0.3C7.5 0.3 9 1.4 10 2.9L12 1.3V7.2H6.2L8.3 5C7.4 3.4 6.4 2.6 5 2.6C3.2 2.6 2.4 4 2.5 6.4Z" fill="#2a7abb" stroke="#1d5a92" stroke-width="0.3"/></svg>
<div class="t " style="left:386.0px;top:170.5px;font-size:10.2px;letter-spacing:-0.3px;">Hüttensteine</div>
<div class="t r" style="left:472px;top:170.5px;width:45.5px;font-size:10.2px;letter-spacing:-0.3px;">46,62</div>
<div class="t c" style="left:520px;top:170.5px;width:33.5px;font-size:10.2px;letter-spacing:-0.3px;">m³</div>
<div class="t r" style="left:553.5px;top:170.5px;width:33.0px;font-size:10.2px;letter-spacing:-0.3px;">93233</div>
<div class="t r" style="left:589px;top:170.5px;width:32.0px;font-size:10.2px;letter-spacing:-0.3px;">50</div>
<div class="t r" style="left:623.5px;top:170.5px;width:61.0px;font-size:10.2px;letter-spacing:-0.3px;">16448,09</div>
<div class="t r" style="left:687px;top:170.5px;width:46.5px;font-size:10.2px;letter-spacing:-0.3px;">0,00</div>
<div class="t r" style="left:736px;top:170.5px;width:47.5px;font-size:10.2px;letter-spacing:-0.3px;">478,85</div>
<div class="t r" style="left:786px;top:170.5px;width:44.0px;font-size:10.2px;letter-spacing:-0.3px;">16926,94</div>
<div class="t r" style="left:832.5px;top:170.5px;width:44.5px;font-size:10.2px;letter-spacing:-0.3px;">-134,05</div>
<div class="t r" style="left:879.5px;top:170.5px;width:47.5px;font-size:10.2px;letter-spacing:-0.3px;">1,78</div>
<div class="t r" style="left:929.5px;top:170.5px;width:50.0px;font-size:10.2px;letter-spacing:-0.3px;">27306,79</div>
<svg style="left:1010.7px;top:170px" width="11.6" height="11.6" viewBox="0 0 11.6 11.6"><rect x="0.6" y="0.6" width="10.4" height="10.4" fill="#fff" stroke="#222" stroke-width="1.15"/><path d="M2.4 5.6L4.8 8.2L9.2 2.8" fill="none" stroke="#111" stroke-width="1.2"/></svg>
<div class="a" style="left:227.5px;top:184.9px;width:1px;height:18.5px;background:#ececec;"></div>
<div class="a" style="left:363.5px;top:184.9px;width:1px;height:18.5px;background:#ececec;"></div>
<div class="a" style="left:383.5px;top:184.9px;width:1px;height:18.5px;background:#ececec;"></div>
<div class="a" style="left:471.5px;top:184.9px;width:1px;height:18.5px;background:#ececec;"></div>
<div class="a" style="left:519.5px;top:184.9px;width:1px;height:18.5px;background:#ececec;"></div>
<div class="a" style="left:553.5px;top:184.9px;width:1px;height:18.5px;background:#ececec;"></div>
<div class="a" style="left:588.5px;top:184.9px;width:1px;height:18.5px;background:#ececec;"></div>
<div class="a" style="left:623.5px;top:184.9px;width:1px;height:18.5px;background:#ececec;"></div>
<div class="a" style="left:686.5px;top:184.9px;width:1px;height:18.5px;background:#ececec;"></div>
<div class="a" style="left:735.5px;top:184.9px;width:1px;height:18.5px;background:#ececec;"></div>
<div class="a" style="left:785.5px;top:184.9px;width:1px;height:18.5px;background:#ececec;"></div>
<div class="a" style="left:831.5px;top:184.9px;width:1px;height:18.5px;background:#ececec;"></div>
<div class="a" style="left:879.5px;top:184.9px;width:1px;height:18.5px;background:#ececec;"></div>
<div class="a" style="left:929.5px;top:184.9px;width:1px;height:18.5px;background:#ececec;"></div>
<div class="a" style="left:981.5px;top:184.9px;width:1px;height:18.5px;background:#ececec;"></div>
<div class="t c" style="left:187px;top:189.0px;width:41.5px;font-size:10.2px;letter-spacing:-0.3px;">320</div>
<div class="t " style="left:230.0px;top:189.0px;font-size:10.2px;letter-spacing:-0.3px;">Schaumglas</div>
<svg style="left:370px;top:190.5px" width="12" height="7.5" viewBox="0 0 12 7.5"><path d="M0.2 6.4C0 2.6 2 0.3 5 0.3C7.5 0.3 9 1.4 10 2.9L12 1.3V7.2H6.2L8.3 5C7.4 3.4 6.4 2.6 5 2.6C3.2 2.6 2.4 4 2.5 6.4Z" fill="#2a7abb" stroke="#1d5a92" stroke-width="0.3"/></svg>
<div class="t " style="left:386.0px;top:189.0px;font-size:10.2px;letter-spacing:-0.3px;">FOAMGLAS® S3</div>
<div class="t r" style="left:472px;top:189.0px;width:45.5px;font-size:10.2px;letter-spacing:-0.3px;">3869,40</div>
<div class="t c" style="left:520px;top:189.0px;width:33.5px;font-size:10.2px;letter-spacing:-0.3px;">kg</div>
<div class="t r" style="left:553.5px;top:189.0px;width:33.0px;font-size:10.2px;letter-spacing:-0.3px;">3869</div>
<div class="t r" style="left:589px;top:189.0px;width:32.0px;font-size:10.2px;letter-spacing:-0.3px;">50</div>
<div class="t r" style="left:623.5px;top:189.0px;width:61.0px;font-size:10.2px;letter-spacing:-0.3px;">5378,47</div>
<div class="t r" style="left:687px;top:189.0px;width:46.5px;font-size:10.2px;letter-spacing:-0.3px;">0,00</div>
<div class="t r" style="left:736px;top:189.0px;width:47.5px;font-size:10.2px;letter-spacing:-0.3px;">52,24</div>
<div class="t r" style="left:786px;top:189.0px;width:44.0px;font-size:10.2px;letter-spacing:-0.3px;">5430,70</div>
<div class="t r" style="left:832.5px;top:189.0px;width:44.5px;font-size:10.2px;letter-spacing:-0.3px;">-26,78</div>
<div class="t r" style="left:879.5px;top:189.0px;width:47.5px;font-size:10.2px;letter-spacing:-0.3px;">0,57</div>
<div class="t r" style="left:929.5px;top:189.0px;width:50.0px;font-size:10.2px;letter-spacing:-0.3px;">23523,80</div>
<svg style="left:1010.7px;top:188px" width="11.6" height="11.6" viewBox="0 0 11.6 11.6"><rect x="0.6" y="0.6" width="10.4" height="10.4" fill="#fff" stroke="#222" stroke-width="1.15"/><path d="M2.4 5.6L4.8 8.2L9.2 2.8" fill="none" stroke="#111" stroke-width="1.2"/></svg>
<div class="a" style="left:187px;top:203.4px;width:845px;height:18.5px;background:#fffee6;"></div>
<div class="a" style="left:227.5px;top:203.4px;width:1px;height:18.5px;background:#f1efd6;"></div>
<div class="a" style="left:363.5px;top:203.4px;width:1px;height:18.5px;background:#f1efd6;"></div>
<div class="a" style="left:383.5px;top:203.4px;width:1px;height:18.5px;background:#f1efd6;"></div>
<div class="a" style="left:471.5px;top:203.4px;width:1px;height:18.5px;background:#f1efd6;"></div>
<div class="a" style="left:519.5px;top:203.4px;width:1px;height:18.5px;background:#f1efd6;"></div>
<div class="a" style="left:553.5px;top:203.4px;width:1px;height:18.5px;background:#f1efd6;"></div>
<div class="a" style="left:588.5px;top:203.4px;width:1px;height:18.5px;background:#f1efd6;"></div>
<div class="a" style="left:623.5px;top:203.4px;width:1px;height:18.5px;background:#f1efd6;"></div>
<div class="a" style="left:686.5px;top:203.4px;width:1px;height:18.5px;background:#f1efd6;"></div>
<div class="a" style="left:735.5px;top:203.4px;width:1px;height:18.5px;background:#f1efd6;"></div>
<div class="a" style="left:785.5px;top:203.4px;width:1px;height:18.5px;background:#f1efd6;"></div>
<div class="a" style="left:831.5px;top:203.4px;width:1px;height:18.5px;background:#f1efd6;"></div>
<div class="a" style="left:879.5px;top:203.4px;width:1px;height:18.5px;background:#f1efd6;"></div>
<div class="a" style="left:929.5px;top:203.4px;width:1px;height:18.5px;background:#f1efd6;"></div>
<div class="a" style="left:981.5px;top:203.4px;width:1px;height:18.5px;background:#f1efd6;"></div>
<div class="t c" style="left:187px;top:207.5px;width:41.5px;font-size:10.2px;letter-spacing:-0.3px;">350</div>
<div class="t " style="left:230.0px;top:207.5px;font-size:10.2px;letter-spacing:-0.3px;">PS Partikelschaum</div>
<svg style="left:370px;top:209.0px" width="12" height="7.5" viewBox="0 0 12 7.5"><path d="M0.2 6.4C0 2.6 2 0.3 5 0.3C7.5 0.3 9 1.4 10 2.9L12 1.3V7.2H6.2L8.3 5C7.4 3.4 6.4 2.6 5 2.6C3.2 2.6 2.4 4 2.5 6.4Z" fill="#2a7abb" stroke="#1d5a92" stroke-width="0.3"/></svg>
<div class="t " style="left:386.0px;top:207.5px;font-size:10.2px;letter-spacing:-0.3px;">EPS-Hartschaum …</div>
<div class="t r" style="left:472px;top:207.5px;width:45.5px;font-size:10.2px;letter-spacing:-0.3px;">4,63</div>
<div class="t c" style="left:520px;top:207.5px;width:33.5px;font-size:10.2px;letter-spacing:-0.3px;">m³</div>
<div class="t r" style="left:553.5px;top:207.5px;width:33.0px;font-size:10.2px;letter-spacing:-0.3px;">93</div>
<div class="t r" style="left:589px;top:207.5px;width:32.0px;font-size:10.2px;letter-spacing:-0.3px;">40</div>
<div class="t r" style="left:623.5px;top:207.5px;width:61.0px;font-size:10.2px;letter-spacing:-0.3px;">248,92</div>
<div class="t r" style="left:687px;top:207.5px;width:46.5px;font-size:10.2px;letter-spacing:-0.3px;">531,16</div>
<div class="t r" style="left:736px;top:207.5px;width:47.5px;font-size:10.2px;letter-spacing:-0.3px;">282,23</div>
<div class="t r" style="left:786px;top:207.5px;width:44.0px;font-size:10.2px;letter-spacing:-0.3px;">1062,31</div>
<div class="t r" style="left:832.5px;top:207.5px;width:44.5px;font-size:10.2px;letter-spacing:-0.3px;">-148,52</div>
<div class="t r" style="left:879.5px;top:207.5px;width:47.5px;font-size:10.2px;letter-spacing:-0.3px;">0,11</div>
<div class="t r" style="left:929.5px;top:207.5px;width:50.0px;font-size:10.2px;letter-spacing:-0.3px;">2203,90</div>
<svg style="left:1010.7px;top:207px" width="11.6" height="11.6" viewBox="0 0 11.6 11.6"><rect x="0.6" y="0.6" width="10.4" height="10.4" fill="#fff" stroke="#222" stroke-width="1.15"/><path d="M2.4 5.6L4.8 8.2L9.2 2.8" fill="none" stroke="#111" stroke-width="1.2"/></svg>
<div class="a" style="left:227.5px;top:221.9px;width:1px;height:18.5px;background:#ececec;"></div>
<div class="a" style="left:363.5px;top:221.9px;width:1px;height:18.5px;background:#ececec;"></div>
<div class="a" style="left:383.5px;top:221.9px;width:1px;height:18.5px;background:#ececec;"></div>
<div class="a" style="left:471.5px;top:221.9px;width:1px;height:18.5px;background:#ececec;"></div>
<div class="a" style="left:519.5px;top:221.9px;width:1px;height:18.5px;background:#ececec;"></div>
<div class="a" style="left:553.5px;top:221.9px;width:1px;height:18.5px;background:#ececec;"></div>
<div class="a" style="left:588.5px;top:221.9px;width:1px;height:18.5px;background:#ececec;"></div>
<div class="a" style="left:623.5px;top:221.9px;width:1px;height:18.5px;background:#ececec;"></div>
<div class="a" style="left:686.5px;top:221.9px;width:1px;height:18.5px;background:#ececec;"></div>
<div class="a" style="left:735.5px;top:221.9px;width:1px;height:18.5px;background:#ececec;"></div>
<div class="a" style="left:785.5px;top:221.9px;width:1px;height:18.5px;background:#ececec;"></div>
<div class="a" style="left:831.5px;top:221.9px;width:1px;height:18.5px;background:#ececec;"></div>
<div class="a" style="left:879.5px;top:221.9px;width:1px;height:18.5px;background:#ececec;"></div>
<div class="a" style="left:929.5px;top:221.9px;width:1px;height:18.5px;background:#ececec;"></div>
<div class="a" style="left:981.5px;top:221.9px;width:1px;height:18.5px;background:#ececec;"></div>
<div class="t c" style="left:187px;top:226.0px;width:41.5px;font-size:10.2px;letter-spacing:-0.3px;">350 […]</div>
<div class="t " style="left:230.0px;top:226.0px;font-size:10.2px;letter-spacing:-0.3px;">Filzunterlage […]</div>
<svg style="left:370px;top:227.5px" width="12" height="7.5" viewBox="0 0 12 7.5"><path d="M0.2 6.4C0 2.6 2 0.3 5 0.3C7.5 0.3 9 1.4 10 2.9L12 1.3V7.2H6.2L8.3 5C7.4 3.4 6.4 2.6 5 2.6C3.2 2.6 2.4 4 2.5 6.4Z" fill="#2a7abb" stroke="#1d5a92" stroke-width="0.3"/></svg>
<div class="t " style="left:386.0px;top:226.0px;font-size:10.2px;letter-spacing:-0.3px;">Holzwolle-Leichtb…</div>
<div class="t r" style="left:472px;top:226.0px;width:45.5px;font-size:10.2px;letter-spacing:-0.3px;">10,50</div>
<div class="t c" style="left:520px;top:226.0px;width:33.5px;font-size:10.2px;letter-spacing:-0.3px;">m³</div>
<div class="t r" style="left:553.5px;top:226.0px;width:33.0px;font-size:10.2px;letter-spacing:-0.3px;">3640</div>
<div class="t r" style="left:589px;top:226.0px;width:32.0px;font-size:10.2px;letter-spacing:-0.3px;">50</div>
<div class="t r" style="left:623.5px;top:226.0px;width:61.0px;font-size:10.2px;letter-spacing:-0.3px;">-308,25</div>
<div class="t r" style="left:687px;top:226.0px;width:46.5px;font-size:10.2px;letter-spacing:-0.3px;">0,00</div>
<div class="t r" style="left:736px;top:226.0px;width:47.5px;font-size:10.2px;letter-spacing:-0.3px;">3331,86</div>
<div class="t r" style="left:786px;top:226.0px;width:44.0px;font-size:10.2px;letter-spacing:-0.3px;">3023,61</div>
<div class="t r" style="left:832.5px;top:226.0px;width:44.5px;font-size:10.2px;letter-spacing:-0.3px;">-1194,33</div>
<div class="t r" style="left:879.5px;top:226.0px;width:47.5px;font-size:10.2px;letter-spacing:-0.3px;">0,32</div>
<div class="t r" style="left:929.5px;top:226.0px;width:50.0px;font-size:10.2px;letter-spacing:-0.3px;">6150,11</div>
<svg style="left:1010.7px;top:225px" width="11.6" height="11.6" viewBox="0 0 11.6 11.6"><rect x="0.6" y="0.6" width="10.4" height="10.4" fill="#fff" stroke="#222" stroke-width="1.15"/><path d="M2.4 5.6L4.8 8.2L9.2 2.8" fill="none" stroke="#111" stroke-width="1.2"/></svg>
<div class="a" style="left:187px;top:240.4px;width:845px;height:18.5px;background:#fffee6;"></div>
<div class="a" style="left:227.5px;top:240.4px;width:1px;height:18.5px;background:#f1efd6;"></div>
<div class="a" style="left:363.5px;top:240.4px;width:1px;height:18.5px;background:#f1efd6;"></div>
<div class="a" style="left:383.5px;top:240.4px;width:1px;height:18.5px;background:#f1efd6;"></div>
<div class="a" style="left:471.5px;top:240.4px;width:1px;height:18.5px;background:#f1efd6;"></div>
<div class="a" style="left:519.5px;top:240.4px;width:1px;height:18.5px;background:#f1efd6;"></div>
<div class="a" style="left:553.5px;top:240.4px;width:1px;height:18.5px;background:#f1efd6;"></div>
<div class="a" style="left:588.5px;top:240.4px;width:1px;height:18.5px;background:#f1efd6;"></div>
<div class="a" style="left:623.5px;top:240.4px;width:1px;height:18.5px;background:#f1efd6;"></div>
<div class="a" style="left:686.5px;top:240.4px;width:1px;height:18.5px;background:#f1efd6;"></div>
<div class="a" style="left:735.5px;top:240.4px;width:1px;height:18.5px;background:#f1efd6;"></div>
<div class="a" style="left:785.5px;top:240.4px;width:1px;height:18.5px;background:#f1efd6;"></div>
<div class="a" style="left:831.5px;top:240.4px;width:1px;height:18.5px;background:#f1efd6;"></div>
<div class="a" style="left:879.5px;top:240.4px;width:1px;height:18.5px;background:#f1efd6;"></div>
<div class="a" style="left:929.5px;top:240.4px;width:1px;height:18.5px;background:#f1efd6;"></div>
<div class="a" style="left:981.5px;top:240.4px;width:1px;height:18.5px;background:#f1efd6;"></div>
<div class="t c" style="left:187px;top:244.5px;width:41.5px;font-size:10.2px;letter-spacing:-0.3px;">350 […]</div>
<div class="t " style="left:230.0px;top:244.5px;font-size:10.2px;letter-spacing:-0.3px;">Parkettboden […]</div>
<svg style="left:370px;top:246.0px" width="12" height="7.5" viewBox="0 0 12 7.5"><path d="M0.2 6.4C0 2.6 2 0.3 5 0.3C7.5 0.3 9 1.4 10 2.9L12 1.3V7.2H6.2L8.3 5C7.4 3.4 6.4 2.6 5 2.6C3.2 2.6 2.4 4 2.5 6.4Z" fill="#2a7abb" stroke="#1d5a92" stroke-width="0.3"/></svg>
<div class="t " style="left:386.0px;top:244.5px;font-size:10.2px;letter-spacing:-0.3px;">Konstruktionsvoll…</div>
<div class="t r" style="left:472px;top:244.5px;width:45.5px;font-size:10.2px;letter-spacing:-0.3px;">5,26</div>
<div class="t c" style="left:520px;top:244.5px;width:33.5px;font-size:10.2px;letter-spacing:-0.3px;">m³</div>
<div class="t r" style="left:553.5px;top:244.5px;width:33.0px;font-size:10.2px;letter-spacing:-0.3px;">3852</div>
<div class="t r" style="left:589px;top:244.5px;width:32.0px;font-size:10.2px;letter-spacing:-0.3px;">50</div>
<div class="t r" style="left:623.5px;top:244.5px;width:61.0px;font-size:10.2px;letter-spacing:-0.3px;">-3745,67</div>
<div class="t r" style="left:687px;top:244.5px;width:46.5px;font-size:10.2px;letter-spacing:-0.3px;">0,00</div>
<div class="t r" style="left:736px;top:244.5px;width:47.5px;font-size:10.2px;letter-spacing:-0.3px;">4263,70</div>
<div class="t r" style="left:786px;top:244.5px;width:44.0px;font-size:10.2px;letter-spacing:-0.3px;">518,03</div>
<div class="t r" style="left:832.5px;top:244.5px;width:44.5px;font-size:10.2px;letter-spacing:-0.3px;">-1988,85</div>
<div class="t r" style="left:879.5px;top:244.5px;width:47.5px;font-size:10.2px;letter-spacing:-0.3px;">0,05</div>
<div class="t r" style="left:929.5px;top:244.5px;width:50.0px;font-size:10.2px;letter-spacing:-0.3px;">1848,51</div>
<svg style="left:1010.7px;top:244px" width="11.6" height="11.6" viewBox="0 0 11.6 11.6"><rect x="0.6" y="0.6" width="10.4" height="10.4" fill="#fff" stroke="#222" stroke-width="1.15"/><path d="M2.4 5.6L4.8 8.2L9.2 2.8" fill="none" stroke="#111" stroke-width="1.2"/></svg>
<div class="a" style="left:227.5px;top:258.9px;width:1px;height:18.5px;background:#ececec;"></div>
<div class="a" style="left:363.5px;top:258.9px;width:1px;height:18.5px;background:#ececec;"></div>
<div class="a" style="left:383.5px;top:258.9px;width:1px;height:18.5px;background:#ececec;"></div>
<div class="a" style="left:471.5px;top:258.9px;width:1px;height:18.5px;background:#ececec;"></div>
<div class="a" style="left:519.5px;top:258.9px;width:1px;height:18.5px;background:#ececec;"></div>
<div class="a" style="left:553.5px;top:258.9px;width:1px;height:18.5px;background:#ececec;"></div>
<div class="a" style="left:588.5px;top:258.9px;width:1px;height:18.5px;background:#ececec;"></div>
<div class="a" style="left:623.5px;top:258.9px;width:1px;height:18.5px;background:#ececec;"></div>
<div class="a" style="left:686.5px;top:258.9px;width:1px;height:18.5px;background:#ececec;"></div>
<div class="a" style="left:735.5px;top:258.9px;width:1px;height:18.5px;background:#ececec;"></div>
<div class="a" style="left:785.5px;top:258.9px;width:1px;height:18.5px;background:#ececec;"></div>
<div class="a" style="left:831.5px;top:258.9px;width:1px;height:18.5px;background:#ececec;"></div>
<div class="a" style="left:879.5px;top:258.9px;width:1px;height:18.5px;background:#ececec;"></div>
<div class="a" style="left:929.5px;top:258.9px;width:1px;height:18.5px;background:#ececec;"></div>
<div class="a" style="left:981.5px;top:258.9px;width:1px;height:18.5px;background:#ececec;"></div>
<div class="t c" style="left:187px;top:263.0px;width:41.5px;font-size:10.2px;letter-spacing:-0.3px;">360</div>
<div class="t " style="left:230.0px;top:263.0px;font-size:10.2px;letter-spacing:-0.3px;">Faserzementplatten</div>
<svg style="left:370px;top:264.5px" width="12" height="7.5" viewBox="0 0 12 7.5"><path d="M0.2 6.4C0 2.6 2 0.3 5 0.3C7.5 0.3 9 1.4 10 2.9L12 1.3V7.2H6.2L8.3 5C7.4 3.4 6.4 2.6 5 2.6C3.2 2.6 2.4 4 2.5 6.4Z" fill="#2a7abb" stroke="#1d5a92" stroke-width="0.3"/></svg>
<div class="t " style="left:386.0px;top:263.0px;font-size:10.2px;letter-spacing:-0.3px;">Faserzementplatte</div>
<div class="t r" style="left:472px;top:263.0px;width:45.5px;font-size:10.2px;letter-spacing:-0.3px;">274,97</div>
<div class="t c" style="left:520px;top:263.0px;width:33.5px;font-size:10.2px;letter-spacing:-0.3px;">m²</div>
<div class="t r" style="left:553.5px;top:263.0px;width:33.0px;font-size:10.2px;letter-spacing:-0.3px;">5499</div>
<div class="t r" style="left:589px;top:263.0px;width:32.0px;font-size:10.2px;letter-spacing:-0.3px;">50</div>
<div class="t r" style="left:623.5px;top:263.0px;width:61.0px;font-size:10.2px;letter-spacing:-0.3px;">1922,83</div>
<div class="t r" style="left:687px;top:263.0px;width:46.5px;font-size:10.2px;letter-spacing:-0.3px;">0,00</div>
<div class="t r" style="left:736px;top:263.0px;width:47.5px;font-size:10.2px;letter-spacing:-0.3px;">53,64</div>
<div class="t r" style="left:786px;top:263.0px;width:44.0px;font-size:10.2px;letter-spacing:-0.3px;">1976,47</div>
<div class="t r" style="left:832.5px;top:263.0px;width:44.5px;font-size:10.2px;letter-spacing:-0.3px;">0,00</div>
<div class="t r" style="left:879.5px;top:263.0px;width:47.5px;font-size:10.2px;letter-spacing:-0.3px;">0,21</div>
<div class="t r" style="left:929.5px;top:263.0px;width:50.0px;font-size:10.2px;letter-spacing:-0.3px;">6095,34</div>
<svg style="left:1010.7px;top:262px" width="11.6" height="11.6" viewBox="0 0 11.6 11.6"><rect x="0.6" y="0.6" width="10.4" height="10.4" fill="#fff" stroke="#222" stroke-width="1.15"/><path d="M2.4 5.6L4.8 8.2L9.2 2.8" fill="none" stroke="#111" stroke-width="1.2"/></svg>
<div class="a" style="left:187px;top:277.4px;width:845px;height:18.5px;background:#fffee6;"></div>
<div class="a" style="left:227.5px;top:277.4px;width:1px;height:18.5px;background:#f1efd6;"></div>
<div class="a" style="left:363.5px;top:277.4px;width:1px;height:18.5px;background:#f1efd6;"></div>
<div class="a" style="left:383.5px;top:277.4px;width:1px;height:18.5px;background:#f1efd6;"></div>
<div class="a" style="left:471.5px;top:277.4px;width:1px;height:18.5px;background:#f1efd6;"></div>
<div class="a" style="left:519.5px;top:277.4px;width:1px;height:18.5px;background:#f1efd6;"></div>
<div class="a" style="left:553.5px;top:277.4px;width:1px;height:18.5px;background:#f1efd6;"></div>
<div class="a" style="left:588.5px;top:277.4px;width:1px;height:18.5px;background:#f1efd6;"></div>
<div class="a" style="left:623.5px;top:277.4px;width:1px;height:18.5px;background:#f1efd6;"></div>
<div class="a" style="left:686.5px;top:277.4px;width:1px;height:18.5px;background:#f1efd6;"></div>
<div class="a" style="left:735.5px;top:277.4px;width:1px;height:18.5px;background:#f1efd6;"></div>
<div class="a" style="left:785.5px;top:277.4px;width:1px;height:18.5px;background:#f1efd6;"></div>
<div class="a" style="left:831.5px;top:277.4px;width:1px;height:18.5px;background:#f1efd6;"></div>
<div class="a" style="left:879.5px;top:277.4px;width:1px;height:18.5px;background:#f1efd6;"></div>
<div class="a" style="left:929.5px;top:277.4px;width:1px;height:18.5px;background:#f1efd6;"></div>
<div class="a" style="left:981.5px;top:277.4px;width:1px;height:18.5px;background:#f1efd6;"></div>
<div class="t c" style="left:187px;top:281.5px;width:41.5px;font-size:10.2px;letter-spacing:-0.3px;">360</div>
<div class="t " style="left:230.0px;top:281.5px;font-size:10.2px;letter-spacing:-0.3px;">Mineralwolle</div>
<svg style="left:370px;top:283.0px" width="12" height="7.5" viewBox="0 0 12 7.5"><path d="M0.2 6.4C0 2.6 2 0.3 5 0.3C7.5 0.3 9 1.4 10 2.9L12 1.3V7.2H6.2L8.3 5C7.4 3.4 6.4 2.6 5 2.6C3.2 2.6 2.4 4 2.5 6.4Z" fill="#2a7abb" stroke="#1d5a92" stroke-width="0.3"/></svg>
<div class="t " style="left:386.0px;top:281.5px;font-size:10.2px;letter-spacing:-0.3px;">Einblasdämmung …</div>
<div class="t r" style="left:472px;top:281.5px;width:45.5px;font-size:10.2px;letter-spacing:-0.3px;">5,98</div>
<div class="t c" style="left:520px;top:281.5px;width:33.5px;font-size:10.2px;letter-spacing:-0.3px;">m³</div>
<div class="t r" style="left:553.5px;top:281.5px;width:33.0px;font-size:10.2px;letter-spacing:-0.3px;">48</div>
<div class="t r" style="left:589px;top:281.5px;width:32.0px;font-size:10.2px;letter-spacing:-0.3px;">50</div>
<div class="t r" style="left:623.5px;top:281.5px;width:61.0px;font-size:10.2px;letter-spacing:-0.3px;">382,70</div>
<div class="t r" style="left:687px;top:281.5px;width:46.5px;font-size:10.2px;letter-spacing:-0.3px;">0,00</div>
<div class="t r" style="left:736px;top:281.5px;width:47.5px;font-size:10.2px;letter-spacing:-0.3px;">11,58</div>
<div class="t r" style="left:786px;top:281.5px;width:44.0px;font-size:10.2px;letter-spacing:-0.3px;">394,28</div>
<div class="t r" style="left:832.5px;top:281.5px;width:44.5px;font-size:10.2px;letter-spacing:-0.3px;">0,00</div>
<div class="t r" style="left:879.5px;top:281.5px;width:47.5px;font-size:10.2px;letter-spacing:-0.3px;">0,04</div>
<div class="t r" style="left:929.5px;top:281.5px;width:50.0px;font-size:10.2px;letter-spacing:-0.3px;">1496,09</div>
<svg style="left:1010.7px;top:281px" width="11.6" height="11.6" viewBox="0 0 11.6 11.6"><rect x="0.6" y="0.6" width="10.4" height="10.4" fill="#fff" stroke="#222" stroke-width="1.15"/><path d="M2.4 5.6L4.8 8.2L9.2 2.8" fill="none" stroke="#111" stroke-width="1.2"/></svg>
<div class="a" style="left:227.5px;top:295.9px;width:1px;height:18.5px;background:#ececec;"></div>
<div class="a" style="left:363.5px;top:295.9px;width:1px;height:18.5px;background:#ececec;"></div>
<div class="a" style="left:383.5px;top:295.9px;width:1px;height:18.5px;background:#ececec;"></div>
<div class="a" style="left:471.5px;top:295.9px;width:1px;height:18.5px;background:#ececec;"></div>
<div class="a" style="left:519.5px;top:295.9px;width:1px;height:18.5px;background:#ececec;"></div>
<div class="a" style="left:553.5px;top:295.9px;width:1px;height:18.5px;background:#ececec;"></div>
<div class="a" style="left:588.5px;top:295.9px;width:1px;height:18.5px;background:#ececec;"></div>
<div class="a" style="left:623.5px;top:295.9px;width:1px;height:18.5px;background:#ececec;"></div>
<div class="a" style="left:686.5px;top:295.9px;width:1px;height:18.5px;background:#ececec;"></div>
<div class="a" style="left:735.5px;top:295.9px;width:1px;height:18.5px;background:#ececec;"></div>
<div class="a" style="left:785.5px;top:295.9px;width:1px;height:18.5px;background:#ececec;"></div>
<div class="a" style="left:831.5px;top:295.9px;width:1px;height:18.5px;background:#ececec;"></div>
<div class="a" style="left:879.5px;top:295.9px;width:1px;height:18.5px;background:#ececec;"></div>
<div class="a" style="left:929.5px;top:295.9px;width:1px;height:18.5px;background:#ececec;"></div>
<div class="a" style="left:981.5px;top:295.9px;width:1px;height:18.5px;background:#ececec;"></div>
<div class="t c" style="left:187px;top:300.0px;width:41.5px;font-size:10.2px;letter-spacing:-0.3px;">360 […]</div>
<div class="t " style="left:230.0px;top:300.0px;font-size:10.2px;letter-spacing:-0.3px;">Zellulosefaser-Dämmstoff</div>
<svg style="left:370px;top:301.5px" width="12" height="7.5" viewBox="0 0 12 7.5"><path d="M0.2 6.4C0 2.6 2 0.3 5 0.3C7.5 0.3 9 1.4 10 2.9L12 1.3V7.2H6.2L8.3 5C7.4 3.4 6.4 2.6 5 2.6C3.2 2.6 2.4 4 2.5 6.4Z" fill="#2a7abb" stroke="#1d5a92" stroke-width="0.3"/></svg>
<div class="t " style="left:386.0px;top:300.0px;font-size:10.2px;letter-spacing:-0.3px;">Zellulosefaserpla…</div>
<div class="t r" style="left:472px;top:300.0px;width:45.5px;font-size:10.2px;letter-spacing:-0.3px;">93,57</div>
<div class="t c" style="left:520px;top:300.0px;width:33.5px;font-size:10.2px;letter-spacing:-0.3px;">m³</div>
<div class="t r" style="left:553.5px;top:300.0px;width:33.0px;font-size:10.2px;letter-spacing:-0.3px;">3873</div>
<div class="t r" style="left:589px;top:300.0px;width:32.0px;font-size:10.2px;letter-spacing:-0.3px;">40</div>
<div class="t r" style="left:623.5px;top:300.0px;width:61.0px;font-size:10.2px;letter-spacing:-0.3px;">-1870,89</div>
<div class="t r" style="left:687px;top:300.0px;width:46.5px;font-size:10.2px;letter-spacing:-0.3px;">14611,91</div>
<div class="t r" style="left:736px;top:300.0px;width:47.5px;font-size:10.2px;letter-spacing:-0.3px;">16482,80</div>
<div class="t r" style="left:786px;top:300.0px;width:44.0px;font-size:10.2px;letter-spacing:-0.3px;">29223,82</div>
<div class="t r" style="left:832.5px;top:300.0px;width:44.5px;font-size:10.2px;letter-spacing:-0.3px;">-6516,35</div>
<div class="t r" style="left:879.5px;top:300.0px;width:47.5px;font-size:10.2px;letter-spacing:-0.3px;">3,07</div>
<div class="t r" style="left:929.5px;top:300.0px;width:50.0px;font-size:10.2px;letter-spacing:-0.3px;">98613,52</div>
<svg style="left:1010.7px;top:299px" width="11.6" height="11.6" viewBox="0 0 11.6 11.6"><rect x="0.6" y="0.6" width="10.4" height="10.4" fill="#fff" stroke="#222" stroke-width="1.15"/><path d="M2.4 5.6L4.8 8.2L9.2 2.8" fill="none" stroke="#111" stroke-width="1.2"/></svg>
<div class="a" style="left:187px;top:314.4px;width:845px;height:18.5px;background:#fffee6;"></div>
<div class="a" style="left:227.5px;top:314.4px;width:1px;height:18.5px;background:#f1efd6;"></div>
<div class="a" style="left:363.5px;top:314.4px;width:1px;height:18.5px;background:#f1efd6;"></div>
<div class="a" style="left:383.5px;top:314.4px;width:1px;height:18.5px;background:#f1efd6;"></div>
<div class="a" style="left:471.5px;top:314.4px;width:1px;height:18.5px;background:#f1efd6;"></div>
<div class="a" style="left:519.5px;top:314.4px;width:1px;height:18.5px;background:#f1efd6;"></div>
<div class="a" style="left:553.5px;top:314.4px;width:1px;height:18.5px;background:#f1efd6;"></div>
<div class="a" style="left:588.5px;top:314.4px;width:1px;height:18.5px;background:#f1efd6;"></div>
<div class="a" style="left:623.5px;top:314.4px;width:1px;height:18.5px;background:#f1efd6;"></div>
<div class="a" style="left:686.5px;top:314.4px;width:1px;height:18.5px;background:#f1efd6;"></div>
<div class="a" style="left:735.5px;top:314.4px;width:1px;height:18.5px;background:#f1efd6;"></div>
<div class="a" style="left:785.5px;top:314.4px;width:1px;height:18.5px;background:#f1efd6;"></div>
<div class="a" style="left:831.5px;top:314.4px;width:1px;height:18.5px;background:#f1efd6;"></div>
<div class="a" style="left:879.5px;top:314.4px;width:1px;height:18.5px;background:#f1efd6;"></div>
<div class="a" style="left:929.5px;top:314.4px;width:1px;height:18.5px;background:#f1efd6;"></div>
<div class="a" style="left:981.5px;top:314.4px;width:1px;height:18.5px;background:#f1efd6;"></div>
<div class="t c" style="left:187px;top:318.5px;width:41.5px;font-size:10.2px;letter-spacing:-0.3px;">360</div>
<div class="t " style="left:230.0px;top:318.5px;font-size:10.2px;letter-spacing:-0.3px;">Holzfaserdämmstoff (WF)</div>
<svg style="left:370px;top:320.0px" width="12" height="7.5" viewBox="0 0 12 7.5"><path d="M0.2 6.4C0 2.6 2 0.3 5 0.3C7.5 0.3 9 1.4 10 2.9L12 1.3V7.2H6.2L8.3 5C7.4 3.4 6.4 2.6 5 2.6C3.2 2.6 2.4 4 2.5 6.4Z" fill="#2a7abb" stroke="#1d5a92" stroke-width="0.3"/></svg>
<div class="t " style="left:386.0px;top:318.5px;font-size:10.2px;letter-spacing:-0.3px;">Holzfaserdämmst…</div>
<div class="t r" style="left:472px;top:318.5px;width:45.5px;font-size:10.2px;letter-spacing:-0.3px;">7,17</div>
<div class="t c" style="left:520px;top:318.5px;width:33.5px;font-size:10.2px;letter-spacing:-0.3px;">m³</div>
<div class="t r" style="left:553.5px;top:318.5px;width:33.0px;font-size:10.2px;letter-spacing:-0.3px;">3228</div>
<div class="t r" style="left:589px;top:318.5px;width:32.0px;font-size:10.2px;letter-spacing:-0.3px;">50</div>
<div class="t r" style="left:623.5px;top:318.5px;width:61.0px;font-size:10.2px;letter-spacing:-0.3px;">-1239,71</div>
<div class="t r" style="left:687px;top:318.5px;width:46.5px;font-size:10.2px;letter-spacing:-0.3px;">0,00</div>
<div class="t r" style="left:736px;top:318.5px;width:47.5px;font-size:10.2px;letter-spacing:-0.3px;">1718,19</div>
<div class="t r" style="left:786px;top:318.5px;width:44.0px;font-size:10.2px;letter-spacing:-0.3px;">478,48</div>
<div class="t r" style="left:832.5px;top:318.5px;width:44.5px;font-size:10.2px;letter-spacing:-0.3px;">-217,35</div>
<div class="t r" style="left:879.5px;top:318.5px;width:47.5px;font-size:10.2px;letter-spacing:-0.3px;">0,05</div>
<div class="t r" style="left:929.5px;top:318.5px;width:50.0px;font-size:10.2px;letter-spacing:-0.3px;">3424,52</div>
<svg style="left:1010.7px;top:318px" width="11.6" height="11.6" viewBox="0 0 11.6 11.6"><rect x="0.6" y="0.6" width="10.4" height="10.4" fill="#fff" stroke="#222" stroke-width="1.15"/><path d="M2.4 5.6L4.8 8.2L9.2 2.8" fill="none" stroke="#111" stroke-width="1.2"/></svg>
<div class="a" style="left:227.5px;top:332.9px;width:1px;height:18.5px;background:#ececec;"></div>
<div class="a" style="left:363.5px;top:332.9px;width:1px;height:18.5px;background:#ececec;"></div>
<div class="a" style="left:383.5px;top:332.9px;width:1px;height:18.5px;background:#ececec;"></div>
<div class="a" style="left:471.5px;top:332.9px;width:1px;height:18.5px;background:#ececec;"></div>
<div class="a" style="left:519.5px;top:332.9px;width:1px;height:18.5px;background:#ececec;"></div>
<div class="a" style="left:553.5px;top:332.9px;width:1px;height:18.5px;background:#ececec;"></div>
<div class="a" style="left:588.5px;top:332.9px;width:1px;height:18.5px;background:#ececec;"></div>
<div class="a" style="left:623.5px;top:332.9px;width:1px;height:18.5px;background:#ececec;"></div>
<div class="a" style="left:686.5px;top:332.9px;width:1px;height:18.5px;background:#ececec;"></div>
<div class="a" style="left:735.5px;top:332.9px;width:1px;height:18.5px;background:#ececec;"></div>
<div class="a" style="left:785.5px;top:332.9px;width:1px;height:18.5px;background:#ececec;"></div>
<div class="a" style="left:831.5px;top:332.9px;width:1px;height:18.5px;background:#ececec;"></div>
<div class="a" style="left:879.5px;top:332.9px;width:1px;height:18.5px;background:#ececec;"></div>
<div class="a" style="left:929.5px;top:332.9px;width:1px;height:18.5px;background:#ececec;"></div>
<div class="a" style="left:981.5px;top:332.9px;width:1px;height:18.5px;background:#ececec;"></div>
<div class="t c" style="left:187px;top:337.0px;width:41.5px;font-size:10.2px;letter-spacing:-0.3px;">360</div>
<div class="t " style="left:230.0px;top:337.0px;font-size:10.2px;letter-spacing:-0.3px;">Dachziegel</div>
<svg style="left:370px;top:338.5px" width="12" height="7.5" viewBox="0 0 12 7.5"><path d="M0.2 6.4C0 2.6 2 0.3 5 0.3C7.5 0.3 9 1.4 10 2.9L12 1.3V7.2H6.2L8.3 5C7.4 3.4 6.4 2.6 5 2.6C3.2 2.6 2.4 4 2.5 6.4Z" fill="#2a7abb" stroke="#1d5a92" stroke-width="0.3"/></svg>
<div class="t " style="left:386.0px;top:337.0px;font-size:10.2px;letter-spacing:-0.3px;">Dachziegel</div>
<div class="t r" style="left:472px;top:337.0px;width:45.5px;font-size:10.2px;letter-spacing:-0.3px;">119,55</div>
<div class="t c" style="left:520px;top:337.0px;width:33.5px;font-size:10.2px;letter-spacing:-0.3px;">m²</div>
<div class="t r" style="left:553.5px;top:337.0px;width:33.0px;font-size:10.2px;letter-spacing:-0.3px;">6217</div>
<div class="t r" style="left:589px;top:337.0px;width:32.0px;font-size:10.2px;letter-spacing:-0.3px;">50</div>
<div class="t r" style="left:623.5px;top:337.0px;width:61.0px;font-size:10.2px;letter-spacing:-0.3px;">1898,26</div>
<div class="t r" style="left:687px;top:337.0px;width:46.5px;font-size:10.2px;letter-spacing:-0.3px;">0,00</div>
<div class="t r" style="left:736px;top:337.0px;width:47.5px;font-size:10.2px;letter-spacing:-0.3px;">36,18</div>
<div class="t r" style="left:786px;top:337.0px;width:44.0px;font-size:10.2px;letter-spacing:-0.3px;">1934,44</div>
<div class="t r" style="left:832.5px;top:337.0px;width:44.5px;font-size:10.2px;letter-spacing:-0.3px;">-11,05</div>
<div class="t r" style="left:879.5px;top:337.0px;width:47.5px;font-size:10.2px;letter-spacing:-0.3px;">0,20</div>
<div class="t r" style="left:929.5px;top:337.0px;width:50.0px;font-size:10.2px;letter-spacing:-0.3px;">8431,70</div>
<svg style="left:1010.7px;top:336px" width="11.6" height="11.6" viewBox="0 0 11.6 11.6"><rect x="0.6" y="0.6" width="10.4" height="10.4" fill="#fff" stroke="#222" stroke-width="1.15"/><path d="M2.4 5.6L4.8 8.2L9.2 2.8" fill="none" stroke="#111" stroke-width="1.2"/></svg>
<div class="a" style="left:187px;top:351.4px;width:845px;height:18.5px;background:#fffee6;"></div>
<div class="a" style="left:227.5px;top:351.4px;width:1px;height:18.5px;background:#f1efd6;"></div>
<div class="a" style="left:363.5px;top:351.4px;width:1px;height:18.5px;background:#f1efd6;"></div>
<div class="a" style="left:383.5px;top:351.4px;width:1px;height:18.5px;background:#f1efd6;"></div>
<div class="a" style="left:471.5px;top:351.4px;width:1px;height:18.5px;background:#f1efd6;"></div>
<div class="a" style="left:519.5px;top:351.4px;width:1px;height:18.5px;background:#f1efd6;"></div>
<div class="a" style="left:553.5px;top:351.4px;width:1px;height:18.5px;background:#f1efd6;"></div>
<div class="a" style="left:588.5px;top:351.4px;width:1px;height:18.5px;background:#f1efd6;"></div>
<div class="a" style="left:623.5px;top:351.4px;width:1px;height:18.5px;background:#f1efd6;"></div>
<div class="a" style="left:686.5px;top:351.4px;width:1px;height:18.5px;background:#f1efd6;"></div>
<div class="a" style="left:735.5px;top:351.4px;width:1px;height:18.5px;background:#f1efd6;"></div>
<div class="a" style="left:785.5px;top:351.4px;width:1px;height:18.5px;background:#f1efd6;"></div>
<div class="a" style="left:831.5px;top:351.4px;width:1px;height:18.5px;background:#f1efd6;"></div>
<div class="a" style="left:879.5px;top:351.4px;width:1px;height:18.5px;background:#f1efd6;"></div>
<div class="a" style="left:929.5px;top:351.4px;width:1px;height:18.5px;background:#f1efd6;"></div>
<div class="a" style="left:981.5px;top:351.4px;width:1px;height:18.5px;background:#f1efd6;"></div>
<div class="t c" style="left:187px;top:355.5px;width:41.5px;font-size:10.2px;letter-spacing:-0.3px;">340 […]</div>
<div class="t " style="left:230.0px;top:355.5px;font-size:10.2px;letter-spacing:-0.3px;">Kalksandstein</div>
<svg style="left:370px;top:357.0px" width="12" height="7.5" viewBox="0 0 12 7.5"><path d="M0.2 6.4C0 2.6 2 0.3 5 0.3C7.5 0.3 9 1.4 10 2.9L12 1.3V7.2H6.2L8.3 5C7.4 3.4 6.4 2.6 5 2.6C3.2 2.6 2.4 4 2.5 6.4Z" fill="#2a7abb" stroke="#1d5a92" stroke-width="0.3"/></svg>
<div class="t " style="left:386.0px;top:355.5px;font-size:10.2px;letter-spacing:-0.3px;">Silka Kalksandstein</div>
<div class="t r" style="left:472px;top:355.5px;width:45.5px;font-size:10.2px;letter-spacing:-0.3px;">70,51</div>
<div class="t c" style="left:520px;top:355.5px;width:33.5px;font-size:10.2px;letter-spacing:-0.3px;">m³</div>
<div class="t r" style="left:553.5px;top:355.5px;width:33.0px;font-size:10.2px;letter-spacing:-0.3px;">70511</div>
<div class="t r" style="left:589px;top:355.5px;width:32.0px;font-size:10.2px;letter-spacing:-0.3px;">50</div>
<div class="t r" style="left:623.5px;top:355.5px;width:61.0px;font-size:10.2px;letter-spacing:-0.3px;">15230,38</div>
<div class="t r" style="left:687px;top:355.5px;width:46.5px;font-size:10.2px;letter-spacing:-0.3px;">0,00</div>
<div class="t r" style="left:736px;top:355.5px;width:47.5px;font-size:10.2px;letter-spacing:-0.3px;">0,00</div>
<div class="t r" style="left:786px;top:355.5px;width:44.0px;font-size:10.2px;letter-spacing:-0.3px;">15230,38</div>
<div class="t r" style="left:832.5px;top:355.5px;width:44.5px;font-size:10.2px;letter-spacing:-0.3px;">0,00</div>
<div class="t r" style="left:879.5px;top:355.5px;width:47.5px;font-size:10.2px;letter-spacing:-0.3px;">1,60</div>
<div class="t r" style="left:929.5px;top:355.5px;width:50.0px;font-size:10.2px;letter-spacing:-0.3px;">33982,38</div>
<svg style="left:1010.7px;top:355px" width="11.6" height="11.6" viewBox="0 0 11.6 11.6"><rect x="0.6" y="0.6" width="10.4" height="10.4" fill="#fff" stroke="#222" stroke-width="1.15"/><path d="M2.4 5.6L4.8 8.2L9.2 2.8" fill="none" stroke="#111" stroke-width="1.2"/></svg>
<div class="a" style="left:227.5px;top:369.9px;width:1px;height:18.5px;background:#ececec;"></div>
<div class="a" style="left:363.5px;top:369.9px;width:1px;height:18.5px;background:#ececec;"></div>
<div class="a" style="left:383.5px;top:369.9px;width:1px;height:18.5px;background:#ececec;"></div>
<div class="a" style="left:471.5px;top:369.9px;width:1px;height:18.5px;background:#ececec;"></div>
<div class="a" style="left:519.5px;top:369.9px;width:1px;height:18.5px;background:#ececec;"></div>
<div class="a" style="left:553.5px;top:369.9px;width:1px;height:18.5px;background:#ececec;"></div>
<div class="a" style="left:588.5px;top:369.9px;width:1px;height:18.5px;background:#ececec;"></div>
<div class="a" style="left:623.5px;top:369.9px;width:1px;height:18.5px;background:#ececec;"></div>
<div class="a" style="left:686.5px;top:369.9px;width:1px;height:18.5px;background:#ececec;"></div>
<div class="a" style="left:735.5px;top:369.9px;width:1px;height:18.5px;background:#ececec;"></div>
<div class="a" style="left:785.5px;top:369.9px;width:1px;height:18.5px;background:#ececec;"></div>
<div class="a" style="left:831.5px;top:369.9px;width:1px;height:18.5px;background:#ececec;"></div>
<div class="a" style="left:879.5px;top:369.9px;width:1px;height:18.5px;background:#ececec;"></div>
<div class="a" style="left:929.5px;top:369.9px;width:1px;height:18.5px;background:#ececec;"></div>
<div class="a" style="left:981.5px;top:369.9px;width:1px;height:18.5px;background:#ececec;"></div>
<div class="t c" style="left:187px;top:374.0px;width:41.5px;font-size:10.2px;letter-spacing:-0.3px;">330</div>
<div class="t " style="left:230.0px;top:374.0px;font-size:10.2px;letter-spacing:-0.3px;">Leichtputz</div>
<svg style="left:370px;top:375.5px" width="12" height="7.5" viewBox="0 0 12 7.5"><path d="M0.2 6.4C0 2.6 2 0.3 5 0.3C7.5 0.3 9 1.4 10 2.9L12 1.3V7.2H6.2L8.3 5C7.4 3.4 6.4 2.6 5 2.6C3.2 2.6 2.4 4 2.5 6.4Z" fill="#2a7abb" stroke="#1d5a92" stroke-width="0.3"/></svg>
<div class="t " style="left:386.0px;top:374.0px;font-size:10.2px;letter-spacing:-0.3px;">Gipsputz (Gips-K…</div>
<div class="t r" style="left:472px;top:374.0px;width:45.5px;font-size:10.2px;letter-spacing:-0.3px;">4,96</div>
<div class="t c" style="left:520px;top:374.0px;width:33.5px;font-size:10.2px;letter-spacing:-0.3px;">m³</div>
<div class="t r" style="left:553.5px;top:374.0px;width:33.0px;font-size:10.2px;letter-spacing:-0.3px;">3471</div>
<div class="t r" style="left:589px;top:374.0px;width:32.0px;font-size:10.2px;letter-spacing:-0.3px;">50</div>
<div class="t r" style="left:623.5px;top:374.0px;width:61.0px;font-size:10.2px;letter-spacing:-0.3px;">665,31</div>
<div class="t r" style="left:687px;top:374.0px;width:46.5px;font-size:10.2px;letter-spacing:-0.3px;">0,00</div>
<div class="t r" style="left:736px;top:374.0px;width:47.5px;font-size:10.2px;letter-spacing:-0.3px;">66,97</div>
<div class="t r" style="left:786px;top:374.0px;width:44.0px;font-size:10.2px;letter-spacing:-0.3px;">732,28</div>
<div class="t r" style="left:832.5px;top:374.0px;width:44.5px;font-size:10.2px;letter-spacing:-0.3px;">0,00</div>
<div class="t r" style="left:879.5px;top:374.0px;width:47.5px;font-size:10.2px;letter-spacing:-0.3px;">0,08</div>
<div class="t r" style="left:929.5px;top:374.0px;width:50.0px;font-size:10.2px;letter-spacing:-0.3px;">2722,86</div>
<svg style="left:1010.7px;top:373px" width="11.6" height="11.6" viewBox="0 0 11.6 11.6"><rect x="0.6" y="0.6" width="10.4" height="10.4" fill="#fff" stroke="#222" stroke-width="1.15"/><path d="M2.4 5.6L4.8 8.2L9.2 2.8" fill="none" stroke="#111" stroke-width="1.2"/></svg>
<div class="a" style="left:187px;top:388.4px;width:845px;height:18.5px;background:#fffee6;"></div>
<div class="a" style="left:227.5px;top:388.4px;width:1px;height:18.5px;background:#f1efd6;"></div>
<div class="a" style="left:363.5px;top:388.4px;width:1px;height:18.5px;background:#f1efd6;"></div>
<div class="a" style="left:383.5px;top:388.4px;width:1px;height:18.5px;background:#f1efd6;"></div>
<div class="a" style="left:471.5px;top:388.4px;width:1px;height:18.5px;background:#f1efd6;"></div>
<div class="a" style="left:519.5px;top:388.4px;width:1px;height:18.5px;background:#f1efd6;"></div>
<div class="a" style="left:553.5px;top:388.4px;width:1px;height:18.5px;background:#f1efd6;"></div>
<div class="a" style="left:588.5px;top:388.4px;width:1px;height:18.5px;background:#f1efd6;"></div>
<div class="a" style="left:623.5px;top:388.4px;width:1px;height:18.5px;background:#f1efd6;"></div>
<div class="a" style="left:686.5px;top:388.4px;width:1px;height:18.5px;background:#f1efd6;"></div>
<div class="a" style="left:735.5px;top:388.4px;width:1px;height:18.5px;background:#f1efd6;"></div>
<div class="a" style="left:785.5px;top:388.4px;width:1px;height:18.5px;background:#f1efd6;"></div>
<div class="a" style="left:831.5px;top:388.4px;width:1px;height:18.5px;background:#f1efd6;"></div>
<div class="a" style="left:879.5px;top:388.4px;width:1px;height:18.5px;background:#f1efd6;"></div>
<div class="a" style="left:929.5px;top:388.4px;width:1px;height:18.5px;background:#f1efd6;"></div>
<div class="a" style="left:981.5px;top:388.4px;width:1px;height:18.5px;background:#f1efd6;"></div>
<div class="t c" style="left:187px;top:392.5px;width:41.5px;font-size:10.2px;letter-spacing:-0.3px;">334</div>
<div class="t " style="left:230.0px;top:392.5px;font-size:10.2px;letter-spacing:-0.3px;">F in AW N - Rahmen […]</div>
<svg style="left:370px;top:394.0px" width="12" height="7.5" viewBox="0 0 12 7.5"><path d="M0.2 6.4C0 2.6 2 0.3 5 0.3C7.5 0.3 9 1.4 10 2.9L12 1.3V7.2H6.2L8.3 5C7.4 3.4 6.4 2.6 5 2.6C3.2 2.6 2.4 4 2.5 6.4Z" fill="#2a7abb" stroke="#1d5a92" stroke-width="0.3"/></svg>
<div class="t " style="left:386.0px;top:392.5px;font-size:10.2px;letter-spacing:-0.3px;">Holz-Blendrahmen</div>
<div class="t r" style="left:472px;top:392.5px;width:45.5px;font-size:10.2px;letter-spacing:-0.3px;">119,96</div>
<div class="t c" style="left:520px;top:392.5px;width:33.5px;font-size:10.2px;letter-spacing:-0.3px;">m</div>
<div class="t r" style="left:553.5px;top:392.5px;width:33.0px;font-size:10.2px;letter-spacing:-0.3px;">900</div>
<div class="t r" style="left:589px;top:392.5px;width:32.0px;font-size:10.2px;letter-spacing:-0.3px;">40</div>
<div class="t r" style="left:623.5px;top:392.5px;width:61.0px;font-size:10.2px;letter-spacing:-0.3px;">-44,36</div>
<div class="t r" style="left:687px;top:392.5px;width:46.5px;font-size:10.2px;letter-spacing:-0.3px;">439,90</div>
<div class="t r" style="left:736px;top:392.5px;width:47.5px;font-size:10.2px;letter-spacing:-0.3px;">484,26</div>
<div class="t r" style="left:786px;top:392.5px;width:44.0px;font-size:10.2px;letter-spacing:-0.3px;">879,80</div>
<div class="t r" style="left:832.5px;top:392.5px;width:44.5px;font-size:10.2px;letter-spacing:-0.3px;">-194,59</div>
<div class="t r" style="left:879.5px;top:392.5px;width:47.5px;font-size:10.2px;letter-spacing:-0.3px;">0,09</div>
<div class="t r" style="left:929.5px;top:392.5px;width:50.0px;font-size:10.2px;letter-spacing:-0.3px;">3543,03</div>
<svg style="left:1010.7px;top:392px" width="11.6" height="11.6" viewBox="0 0 11.6 11.6"><rect x="0.6" y="0.6" width="10.4" height="10.4" fill="#fff" stroke="#222" stroke-width="1.15"/><path d="M2.4 5.6L4.8 8.2L9.2 2.8" fill="none" stroke="#111" stroke-width="1.2"/></svg>
<div class="a" style="left:187px;top:129.4px;width:845px;height:18.5px;background:transparent;border:1px dotted #1a2a3a"></div>
<div class="a" style="left:1032px;top:112px;width:14px;height:294px;background:#f0f0f0;"></div>
<div class="a" style="left:1033px;top:128px;width:11px;height:117px;background:#cdcdcd;"></div>
<svg style="left:1034px;top:117px" width="10" height="7" viewBox="0 0 10 7"><path d="M1.5 5.5L5 2L8.5 5.5" fill="none" stroke="#222" stroke-width="1.4"/></svg>
<svg style="left:1034px;top:396px" width="10" height="7" viewBox="0 0 10 7"><path d="M1.5 1.5L5 5L8.5 1.5" fill="none" stroke="#222" stroke-width="1.4"/></svg>
<div class="a" style="left:185.5px;top:405.8px;width:861.5px;height:5.7px;background:#c2c2c2;"></div>
<div class="a" style="left:185.5px;top:411px;width:861.5px;height:293px;background:#fff;"></div>
<div class="a" style="left:185.5px;top:411px;width:861.5px;height:22px;background:#f0f0f0;"></div>
<div class="a" style="left:185.5px;top:411px;width:2px;height:293px;background:#d4d4d4;"></div>
<div class="a" style="left:1043px;top:433px;width:4px;height:271px;background:#f4f4f4;"></div>
<div class="t b" style="left:194px;top:416px;font-size:10.5px;letter-spacing:-0.03px">Ergebnisse</div>
<div class="a" style="left:206.5px;top:437px;width:1px;height:20px;background:#e2e2e2;"></div>
<div class="a" style="left:407.5px;top:437px;width:1px;height:20px;background:#e2e2e2;"></div>
<div class="a" style="left:527.0px;top:437px;width:1px;height:20px;background:#e2e2e2;"></div>
<div class="a" style="left:672.0px;top:437px;width:1px;height:20px;background:#e2e2e2;"></div>
<div class="a" style="left:747.5px;top:437px;width:1px;height:20px;background:#e2e2e2;"></div>
<div class="a" style="left:865.0px;top:437px;width:1px;height:20px;background:#e2e2e2;"></div>
<div class="t r" style="left:323px;width:200px;top:440.5px;font-size:10.2px;letter-spacing:-0.3px;letter-spacing:-0.4px">GWP (kg CO₂ Äqu.)</div>
<div class="t r" style="left:467.5px;width:200px;top:440.5px;font-size:10.2px;letter-spacing:-0.3px;letter-spacing:-0.4px">GWP (kg CO₂ Äqu./(m² NRF a))</div>
<div class="t r" style="left:543px;width:200px;top:440.5px;font-size:10.2px;letter-spacing:-0.3px;letter-spacing:-0.4px">PE_ne (kWh)</div>
<div class="t r" style="left:660.5px;width:200px;top:440.5px;font-size:10.2px;letter-spacing:-0.3px;letter-spacing:-0.4px">PE_ne (kWh/(m² NRF a))</div>
<div class="t " style="left:200.5px;top:459.7px;font-size:10.4px;letter-spacing:-0.1px;color:#17245e">Bau im Lebenszyklus (graue Emissionen)</div>
<div class="a" style="left:391.5px;top:464.8px;width:614.5px;height:1.8px;background:#cdd3e0;"></div>
<svg style="left:1012.8px;top:462px" width="9" height="6" viewBox="0 0 9 6"><path d="M1.2 5L4.5 1.7L7.8 5" fill="none" stroke="#14144a" stroke-width="1.8"/></svg>
<div class="t " style="left:211.5px;top:476.7px;font-size:10.2px;letter-spacing:-0.3px">Herstellung (Modul A1-A3)</div>
<div class="t r" style="left:428px;width:100px;top:476.7px;font-size:10.2px;letter-spacing:-0.3px">74.856</div>
<div class="t r" style="left:572.5px;width:100px;top:476.7px;font-size:10.2px;letter-spacing:-0.3px">7,87</div>
<div class="t r" style="left:648px;width:100px;top:476.7px;font-size:10.2px;letter-spacing:-0.3px">291.707</div>
<div class="t r" style="left:766px;width:100px;top:476.7px;font-size:10.2px;letter-spacing:-0.3px">30,67</div>
<div class="t " style="left:211.5px;top:492.7px;font-size:10.2px;letter-spacing:-0.3px">Austausch (Modul B4)</div>
<div class="t r" style="left:428px;width:100px;top:492.7px;font-size:10.2px;letter-spacing:-0.3px">45.517</div>
<div class="t r" style="left:572.5px;width:100px;top:492.7px;font-size:10.2px;letter-spacing:-0.3px">4,79</div>
<div class="t r" style="left:648px;width:100px;top:492.7px;font-size:10.2px;letter-spacing:-0.3px">161.329</div>
<div class="t r" style="left:766px;width:100px;top:492.7px;font-size:10.2px;letter-spacing:-0.3px">16,96</div>
<div class="t " style="left:211.5px;top:508.7px;font-size:10.2px;letter-spacing:-0.3px">Entsorgung (Modul C3, C4)</div>
<div class="t r" style="left:428px;width:100px;top:508.7px;font-size:10.2px;letter-spacing:-0.3px">29.686</div>
<div class="t r" style="left:572.5px;width:100px;top:508.7px;font-size:10.2px;letter-spacing:-0.3px">3,12</div>
<div class="t r" style="left:648px;width:100px;top:508.7px;font-size:10.2px;letter-spacing:-0.3px">10.304</div>
<div class="t r" style="left:766px;width:100px;top:508.7px;font-size:10.2px;letter-spacing:-0.3px">1,08</div>
<div class="t " style="left:211.5px;top:524.4000000000001px;font-size:10.2px;letter-spacing:-0.3px">Sockelbetrag (Modul A1-A3, B4, C3, C4)</div>
<div class="t r" style="left:428px;width:100px;top:524.4000000000001px;font-size:10.2px;letter-spacing:-0.3px">12.364</div>
<div class="t r" style="left:572.5px;width:100px;top:524.4000000000001px;font-size:10.2px;letter-spacing:-0.3px">1,30</div>
<div class="t r" style="left:648px;width:100px;top:524.4000000000001px;font-size:10.2px;letter-spacing:-0.3px">44.701</div>
<div class="t r" style="left:766px;width:100px;top:524.4000000000001px;font-size:10.2px;letter-spacing:-0.3px">4,70</div>
<div class="t " style="left:211.5px;top:540.3000000000001px;font-size:10.2px;letter-spacing:-0.3px;font-weight:bold;letter-spacing:0.08px">Zwischensumme Bau</div>
<div class="t r" style="left:428px;width:100px;top:540.3000000000001px;font-size:10.2px;letter-spacing:-0.3px;font-weight:bold;letter-spacing:0.08px;letter-spacing:0.35px">162.423</div>
<div class="t r" style="left:572.5px;width:100px;top:540.3000000000001px;font-size:10.2px;letter-spacing:-0.3px;font-weight:bold;letter-spacing:0.08px;letter-spacing:0.35px">17,08</div>
<div class="t r" style="left:648px;width:100px;top:540.3000000000001px;font-size:10.2px;letter-spacing:-0.3px;font-weight:bold;letter-spacing:0.08px;letter-spacing:0.35px">508.041</div>
<div class="t r" style="left:766px;width:100px;top:540.3000000000001px;font-size:10.2px;letter-spacing:-0.3px;font-weight:bold;letter-spacing:0.08px;letter-spacing:0.35px">53,42</div>
<div class="t " style="left:211.5px;top:556.3000000000001px;font-size:10.2px;letter-spacing:-0.3px;color:#7e7e7e">Recycling, vermiedene Emiss. (Modul D)</div>
<div class="t r" style="left:428px;width:100px;top:556.3000000000001px;font-size:10.2px;letter-spacing:-0.3px;color:#7e7e7e">-17.230</div>
<div class="t r" style="left:572.5px;width:100px;top:556.3000000000001px;font-size:10.2px;letter-spacing:-0.3px;color:#7e7e7e">-1,81</div>
<div class="t r" style="left:648px;width:100px;top:556.3000000000001px;font-size:10.2px;letter-spacing:-0.3px;color:#7e7e7e">-54.487</div>
<div class="t r" style="left:766px;width:100px;top:556.3000000000001px;font-size:10.2px;letter-spacing:-0.3px;color:#7e7e7e">-5,73</div>
<div class="t " style="left:211.5px;top:572.2px;font-size:10.2px;letter-spacing:-0.3px;color:#7e7e7e">Sockelbetrag (Modul D)</div>
<div class="t r" style="left:428px;width:100px;top:572.2px;font-size:10.2px;letter-spacing:-0.3px;color:#7e7e7e">-5.802</div>
<div class="t r" style="left:572.5px;width:100px;top:572.2px;font-size:10.2px;letter-spacing:-0.3px;color:#7e7e7e">-0,61</div>
<div class="t r" style="left:648px;width:100px;top:572.2px;font-size:10.2px;letter-spacing:-0.3px;color:#7e7e7e">-15.217</div>
<div class="t r" style="left:766px;width:100px;top:572.2px;font-size:10.2px;letter-spacing:-0.3px;color:#7e7e7e">-1,60</div>
<div class="t " style="left:200.5px;top:591.5px;font-size:10.4px;letter-spacing:-0.1px;color:#17245e">Betrieb (schwarze Emissionen)</div>
<div class="a" style="left:344.5px;top:596.5999999999999px;width:661.5px;height:1.8px;background:#cdd3e0;"></div>
<svg style="left:1012.8px;top:594px" width="9" height="6" viewBox="0 0 9 6"><path d="M1.2 5L4.5 1.7L7.8 5" fill="none" stroke="#14144a" stroke-width="1.8"/></svg>
<div class="t " style="left:211.5px;top:608.7px;font-size:10.2px;letter-spacing:-0.3px;letter-spacing:-0.45px">Energieverbrauch im Lebenszyklus (Modul B6)</div>
<div class="t r" style="left:428px;width:100px;top:608.7px;font-size:10.2px;letter-spacing:-0.3px">-26.539</div>
<div class="t r" style="left:648px;width:100px;top:608.7px;font-size:10.2px;letter-spacing:-0.3px">-92.866</div>
<div class="t " style="left:211.5px;top:624.7px;font-size:10.2px;letter-spacing:-0.3px;letter-spacing:-0.45px">Energieverbrauch pro Jahr (Modul B6)</div>
<div class="t r" style="left:428px;width:100px;top:624.7px;font-size:10.2px;letter-spacing:-0.3px">-531</div>
<div class="t r" style="left:572.5px;width:100px;top:624.7px;font-size:10.2px;letter-spacing:-0.3px">-2,79</div>
<div class="t r" style="left:648px;width:100px;top:624.7px;font-size:10.2px;letter-spacing:-0.3px">-1.857</div>
<div class="t r" style="left:766px;width:100px;top:624.7px;font-size:10.2px;letter-spacing:-0.3px">-9,76</div>
<div class="t " style="left:200.5px;top:643.9000000000001px;font-size:10.4px;letter-spacing:-0.1px;color:#17245e">Summe Bau und Betrieb</div>
<div class="a" style="left:316.5px;top:649.0px;width:689.5px;height:1.8px;background:#cdd3e0;"></div>
<svg style="left:1012.8px;top:647px" width="9" height="6" viewBox="0 0 9 6"><path d="M1.2 5L4.5 1.7L7.8 5" fill="none" stroke="#14144a" stroke-width="1.8"/></svg>
<div class="t " style="left:211.5px;top:661.5px;font-size:10.2px;letter-spacing:-0.3px">im Lebenszyklus</div>
<div class="t r" style="left:428px;width:100px;top:661.5px;font-size:10.2px;letter-spacing:-0.3px">135.883</div>
<div class="t r" style="left:648px;width:100px;top:661.5px;font-size:10.2px;letter-spacing:-0.3px">415.175</div>
<div class="t " style="left:211.5px;top:677.5px;font-size:10.2px;letter-spacing:-0.3px;font-weight:bold;letter-spacing:0.08px">pro Jahr</div>
<div class="t r" style="left:428px;width:100px;top:677.5px;font-size:10.2px;letter-spacing:-0.3px;font-weight:bold;letter-spacing:0.08px;letter-spacing:0.35px">2.718</div>
<div class="t r" style="left:572.5px;width:100px;top:677.5px;font-size:10.2px;letter-spacing:-0.3px;font-weight:bold;letter-spacing:0.08px;letter-spacing:0.35px">14,29</div>
<div class="t r" style="left:648px;width:100px;top:677.5px;font-size:10.2px;letter-spacing:-0.3px;font-weight:bold;letter-spacing:0.08px;letter-spacing:0.35px">8.304</div>
<div class="t r" style="left:766px;width:100px;top:677.5px;font-size:10.2px;letter-spacing:-0.3px;font-weight:bold;letter-spacing:0.08px;letter-spacing:0.35px">43,65</div>
<div class="a" style="left:1029px;top:436px;width:14px;height:262px;background:#f0f0f0;"></div>
<div class="a" style="left:1030px;top:451px;width:11.5px;height:216px;background:#cdcdcd;"></div>
<svg style="left:1031px;top:440px" width="10" height="7" viewBox="0 0 10 7"><path d="M1.5 5.5L5 2L8.5 5.5" fill="none" stroke="#222" stroke-width="1.4"/></svg>
<svg style="left:1031px;top:687px" width="10" height="7" viewBox="0 0 10 7"><path d="M1.5 1.5L5 5L8.5 1.5" fill="none" stroke="#222" stroke-width="1.4"/></svg>
<div class="a" style="left:187px;top:409px;width:743.3px;height:289.8px;background:transparent;border:2px solid #8a1a1a"></div>
<div class="a" style="left:1046.6px;top:88px;width:1.2px;height:613px;background:#f6f6f6;"></div>
<div class="a" style="left:1047.8px;top:88px;width:1.4px;height:593px;background:#7c7c7c;"></div>
<div class="a" style="left:1049px;top:67px;width:151px;height:637px;background:#f0f0f0;"></div>
<div class="a" style="left:1050px;top:68px;width:124px;height:17.4px;background:#e1e1e1;border:1px solid #c4c4c4;border-bottom-color:#f8f8f8;border-left-color:#d0d0d0"></div>
<div class="t " style="left:1052.6px;top:71.4px;font-size:10.2px;letter-spacing:-0.25px">Ist-Zustand</div>
<svg style="left:1162.6px;top:75px" width="9" height="6" viewBox="0 0 9 6"><path d="M1 1L4.5 4.5L8 1" fill="none" stroke="#222" stroke-width="1.1"/></svg>
<div class="a" style="left:1176px;top:68px;width:19px;height:18px;background:#fff;border:1.5px solid #1f4468"></div>
<div class="a" style="left:1178.5px;top:70.5px;width:14px;height:13px;background:#a8d130;"></div>
<div class="t b c" style="left:1178.5px;top:71px;width:14px;font-size:12.5px;line-height:13px;height:13px;color:#fff;letter-spacing:0">A</div>
<div class="big" style="top:108px;letter-spacing:-1.65px">GEG 2020</div>
<div class="circ g" style="left:1153.0px;top:113.0px"></div>
<div class="circ" style="left:1174.1px;top:113.0px"></div>
<div class="din" style="top:131px">DIN V 18599</div>
<div class="vl" style="top:160px;height:113px"><div class="vt" style="top:113px;width:113px;"><span style="position:relative;left:-3px;letter-spacing:-0.33px">Effizienzklasse</span></div></div>
<div class="a" style="left:1074px;top:160px;width:119px;height:113px;background:#9fc305;"></div>
<div class="a b" style="left:1084px;top:161.2px;font-size:97.7px;line-height:112px;color:#fff;letter-spacing:0;transform:scaleX(1.095);transform-origin:0 0;-webkit-text-stroke:2.2px #fff;paint-order:stroke">A</div>
<div class="a b" style="left:1150.2px;top:149.4px;font-size:71.5px;line-height:80px;color:#fff;letter-spacing:0">+</div>
<div class="a r" style="left:1090px;width:100.5px;top:255px;color:#fff;font-size:10.3px;letter-spacing:0.15px;line-height:13px;text-align:right"><b style="font-size:12px;letter-spacing:0">18</b> kWh/m²</div>
<div class="vl" style="top:279px;height:25.5px"><div class="vt" style="top:25.5px;width:25.5px;">Qp</div></div>
<div class="bar" style="top:279px;height:12px;width:54px;background:#c9c9c9;line-height:13px;">77,7</div>
<div class="bar" style="top:292.5px;">9,8</div>
<div class="vl" style="top:312px;height:17px"><div class="vt" style="top:17px;width:17px;font-weight:normal;font-size:8.8px;letter-spacing:0.15px;-webkit-text-stroke:0.1px;">EH</div></div>
<div class="bar" style="top:312px;height:16.5px;width:27px;background:#a3cf3f;border:1px solid #6e9422;color:#fff;font-size:8.5px;letter-spacing:-0.45px;line-height:14px;padding-left:1px;overflow:hidden">40 NH</div>
<div class="vl" style="top:336.5px;height:39.5px"><div class="vt" style="top:39.5px;width:39.5px;">H'<span style="font-size:6px;vertical-align:-2px">T</span></div></div>
<div class="bar" style="top:337px;height:11.5px;width:17px;background:linear-gradient(90deg,#4f8a10,#8cbf26);line-height:12.5px;">0,22</div>
<div class="bar" style="top:351px;height:10.5px;width:17px;background:#c9c9c9;line-height:11.5px;">0,40</div>
<div class="bar" style="top:364.5px;height:10.5px;width:17px;background:#c9c9c9;line-height:11.5px;">0,40</div>
<div class="big" style="top:380.5px;letter-spacing:0.5px;transform:scaleX(0.76);transform-origin:0 0">EE</div>
<div class="circ g" style="left:1153.0px;top:384.5px"></div>
<div class="circ" style="left:1174.1px;top:384.5px"></div>
<div class="vl" style="top:413px;height:26px"><div class="vt" style="top:26px;width:26px;"></div></div>
<div class="bar" style="top:413px;height:11.5px;width:78px;background:#c9c9c9;line-height:12.5px;">100%</div>
<div class="bar" style="top:426px;height:13px;width:119px;background:linear-gradient(90deg,#b9281e 0%,#e07a22 25%,#fdd92e 50%,#b5c420 72%,#4f8a10 100%);line-height:14px;">604%</div>
<div class="big" style="top:443px;letter-spacing:-1.1px">Sommer</div>
<div class="circ g" style="left:1153.0px;top:447.5px"></div>
<div class="circ" style="left:1174.1px;top:447.5px"></div>
<div class="a" style="left:1049px;top:476px;width:151px;height:1.5px;background:#8a8a8a;"></div>
<div class="big" style="top:480.5px">Luft</div>
<div class="circ g" style="left:1131.0px;top:482.5px"></div>
<div class="circ" style="left:1153.0px;top:482.5px"></div>
<div class="circ" style="left:1174.1px;top:482.5px"></div>
<div class="vl" style="top:507px;height:25.5px"><div class="vt" style="top:25.5px;width:25.5px;font-weight:normal;font-size:8.8px;letter-spacing:0.15px;-webkit-text-stroke:0.1px;">Inf min</div></div>
<div class="bar" style="top:507px;height:11.5px;width:54px;background:#c9c9c9;line-height:12.5px;">31,5</div>
<div class="bar" style="top:520px;height:12.5px;width:49px;background:linear-gradient(90deg,#4f8a10 0%,#a9c022 55%,#f7dc2e 100%);line-height:13.5px;">28,5</div>
<div class="a" style="left:1049px;top:538.5px;width:151px;height:1.5px;background:#8a8a8a;"></div>
<div class="big" style="top:543.5px">Beratung</div>
<div class="circ" style="left:1153.0px;top:546.0px"></div>
<div class="circ" style="left:1174.1px;top:546.0px"></div>
<div class="din" style="top:567px">DIN V 18599</div>
<div class="vl" style="top:586px;height:26px"><div class="vt" style="top:26px;width:26px;font-weight:normal;font-size:8.8px;letter-spacing:0.15px;-webkit-text-stroke:0.1px;">EKZ</div></div>
<div class="bar" style="top:586px;height:12px;width:95px;background:linear-gradient(90deg,#4f8a10 0%,#a9c022 35%,#fdd92e 62%,#ee9a28 85%,#d9701e 100%);line-height:13px;">4,1</div>
<div class="vl" style="top:617.5px;height:25.5px"><div class="vt" style="top:25.5px;width:25.5px;font-weight:normal;font-size:8.8px;letter-spacing:0.15px;-webkit-text-stroke:0.1px;">CO<span style="font-size:6px;vertical-align:-2px">2</span></div></div>
<div class="bar" style="top:617.5px;height:12px;width:95px;background:linear-gradient(90deg,#4f8a10 0%,#a9c022 35%,#fdd92e 62%,#ee9a28 85%,#d9701e 100%);line-height:13px;">435</div>
<div class="a" style="left:1196px;top:67px;width:2.4px;height:637px;background:#e4e4e4;"></div>
<div class="a" style="left:1198.4px;top:67px;width:1.6px;height:637px;background:#5a5048;"></div>
<div class="a" style="left:1198.6px;top:0px;width:1.4px;height:67px;background:#555;"></div>
<div class="a" style="left:0px;top:0px;width:1px;height:704px;background:#555;"></div>
<div class="a" style="left:1px;top:67.5px;width:2.5px;height:634px;background:#f6f6f6;"></div>
<div class="a" style="left:1px;top:44px;width:1.2px;height:24px;background:#fbfbf4;"></div>
<div class="a" style="left:0px;top:701.5px;width:1200px;height:2.5px;background:#111;"></div>
<div class="a" style="left:0px;top:700.5px;width:1200px;height:1px;background:#f8f8f8;"></div>
</body></html>
